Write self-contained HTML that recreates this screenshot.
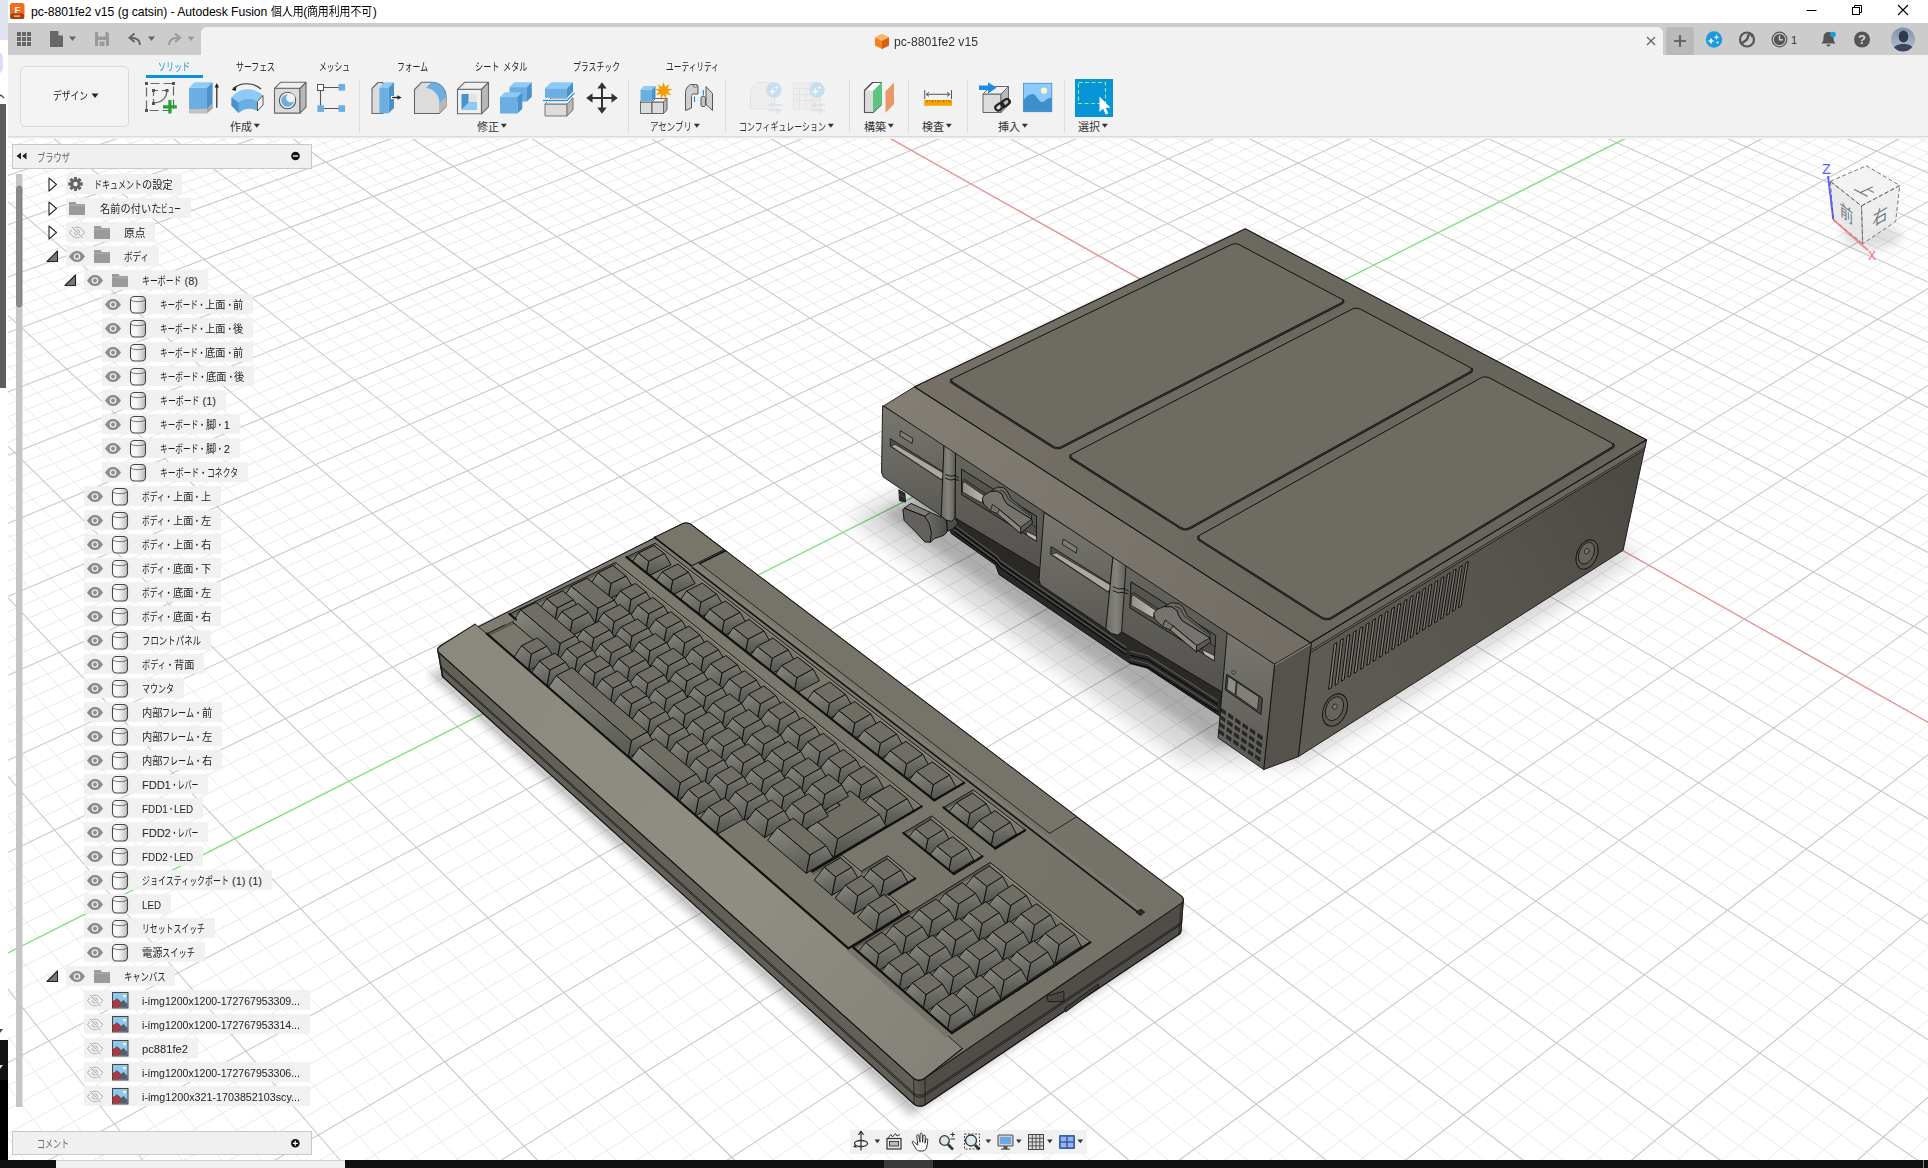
<!DOCTYPE html>
<html lang="ja"><head><meta charset="utf-8"><title>pc-8801fe2 v15 - Autodesk Fusion</title>
<style>*{box-sizing:border-box;margin:0;padding:0}
html,body{width:1928px;height:1168px;overflow:hidden;background:#fff}
body{font-family:"Liberation Sans","Noto Sans CJK JP",sans-serif;color:#222}
#app{position:relative;width:1928px;height:1168px;overflow:hidden;background:#fff}
#vp{position:absolute;left:0;top:0}
.abs{position:absolute}
#titlebar{left:8px;top:0;width:1920px;height:23px;background:#fff}
#title{left:31px;top:4px;font-size:12.2px;line-height:16px;color:#000;white-space:nowrap;letter-spacing:-0.05px}
#appbar{left:8px;top:23px;width:1920px;height:32px;background:#cccccc}
#doctab{left:201px;top:27px;width:1462px;height:29px;background:#f2f2f2;border-radius:6px 6px 0 0}
#toolbar{left:8px;top:55px;width:1920px;height:82px;background:#f2f2f2;border-bottom:1px solid #dadada}
#tbshadow{left:8px;top:137px;width:1920px;height:2px;background:linear-gradient(#e9e9e9,#f8f8f8)}
.tab{position:absolute;top:59px;font-size:11px;line-height:16px;color:#222;white-space:nowrap;transform-origin:0 50%}
.grp{position:absolute;top:119px;font-size:11px;line-height:16px;color:#333;white-space:nowrap;transform-origin:0 50%}
.nr{display:inline-block;white-space:pre}
.sq{display:inline-block;transform-origin:0 50%;white-space:pre;vertical-align:top}
.vdiv{position:absolute;top:80px;width:1px;height:52px;background:#dcdcdc}
#leftstrip{left:0;top:0;width:8px;height:1168px;background:#fff}
#botstrip{left:0;top:1160px;width:1928px;height:8px;background:#101010}
.tree{position:absolute;height:20px;background:rgba(240,240,240,.93);font-size:11px;line-height:20.5px;color:#222;white-space:nowrap}
.tree .t{position:absolute;top:1px;left:0;display:inline-block}
</style></head><body>
<div id="app">
<svg id="vp" width="1928" height="1168" viewBox="0 0 1928 1168">
<defs>
<filter id="blur6" x="-50%" y="-50%" width="200%" height="200%"><feGaussianBlur stdDeviation="6"/></filter>
<filter id="blur10" x="-50%" y="-50%" width="200%" height="200%"><feGaussianBlur stdDeviation="10"/></filter>
<filter id="blur4" x="-50%" y="-50%" width="200%" height="200%"><feGaussianBlur stdDeviation="4"/></filter>
<linearGradient id="pcTop" gradientUnits="userSpaceOnUse" x1="950" y1="420" x2="1600" y2="420"><stop offset="0" stop-color="#747067"/><stop offset=".5" stop-color="#6b6860"/><stop offset="1" stop-color="#66635b"/></linearGradient>
<linearGradient id="pcSlope" gradientUnits="userSpaceOnUse" x1="900" y1="400" x2="1300" y2="650"><stop offset="0" stop-color="#827e74"/><stop offset="1" stop-color="#726e66"/></linearGradient>
<linearGradient id="pcRight" gradientUnits="userSpaceOnUse" x1="1300" y1="700" x2="1640" y2="500"><stop offset="0" stop-color="#5f5c55"/><stop offset=".6" stop-color="#57544e"/><stop offset="1" stop-color="#4d4a45"/></linearGradient>
<linearGradient id="pcFront" x1="0" y1="0" x2="0" y2="1"><stop offset="0" stop-color="#787770"/><stop offset="1" stop-color="#5a5954"/></linearGradient>
<linearGradient id="pcRecess" x1="0" y1="0" x2="0" y2="1"><stop offset="0" stop-color="#66655f"/><stop offset="1" stop-color="#53524e"/></linearGradient>
<linearGradient id="pcPillar" x1="0" y1="0" x2="1" y2="0"><stop offset="0" stop-color="#6a6963"/><stop offset=".5" stop-color="#85847c"/><stop offset="1" stop-color="#5c5b56"/></linearGradient>
<linearGradient id="knobSide" x1="0" y1="0" x2="1" y2="0"><stop offset="0" stop-color="#706f6a"/><stop offset="1" stop-color="#4a4946"/></linearGradient>
<linearGradient id="lightL" x1="0" y1="0" x2="1" y2="0"><stop offset="0" stop-color="#8f8d86"/><stop offset="1" stop-color="#bdbab1"/></linearGradient>
<linearGradient id="kFront" x1="0" y1="0" x2="0.3" y2="1"><stop offset="0" stop-color="#8a8a84"/><stop offset="1" stop-color="#5f5f5a"/></linearGradient>
<linearGradient id="kRight" x1="0" y1="0" x2="0" y2="1"><stop offset="0" stop-color="#7b7b75"/><stop offset="1" stop-color="#4f4f4b"/></linearGradient>
<linearGradient id="kbTop" gradientUnits="userSpaceOnUse" x1="440" y1="650" x2="1180" y2="900"><stop offset="0" stop-color="#7f7c72"/><stop offset="1" stop-color="#747168"/></linearGradient>
<linearGradient id="kbPalm" gradientUnits="userSpaceOnUse" x1="440" y1="650" x2="920" y2="1080"><stop offset="0" stop-color="#8b887e"/><stop offset=".6" stop-color="#908d83"/><stop offset="1" stop-color="#85827a"/></linearGradient>
</defs>
<rect x="0" y="0" width="1928" height="1168" fill="#fff"/>
<path d="M8.0 138.4L12.2 137.0M8.0 147.5L39.6 137.0M8.0 156.8L67.0 137.0M8.0 166.2L94.4 137.0M8.0 185.2L149.2 137.0M8.0 194.9L176.5 137.0M8.0 204.7L203.9 137.0M8.0 214.7L231.3 137.0M8.0 234.9L286.1 137.0M8.0 245.2L313.5 137.0M8.0 255.7L340.9 137.0M8.0 266.2L368.3 137.0M8.0 287.8L423.1 137.0M8.0 298.7L450.5 137.0M8.0 309.9L477.9 137.0M8.0 321.1L505.2 137.0M8.0 344.1L560.0 137.0M8.0 355.8L587.4 137.0M8.0 367.6L614.8 137.0M8.0 379.7L642.2 137.0M8.0 404.2L697.0 137.0M8.0 416.7L724.4 137.0M8.0 429.4L751.8 137.0M8.0 442.3L779.2 137.0M8.0 468.5L833.9 137.0M8.0 481.9L861.3 137.0M8.0 495.5L888.7 137.0M8.0 509.3L916.1 137.0M8.0 537.5L970.9 137.0M8.0 551.9L998.3 137.0M8.0 566.5L1025.7 137.0M8.0 581.3L1053.1 137.0M8.0 611.7L1107.8 137.0M8.0 627.2L1135.2 137.0M8.0 642.9L1162.6 137.0M8.0 658.9L1190.0 137.0M8.0 691.6L1244.8 137.0M8.0 708.4L1272.2 137.0M8.0 725.4L1299.6 137.0M8.0 742.7L1327.0 137.0M8.0 778.1L1381.7 137.0M8.0 796.3L1409.1 137.0M8.0 814.7L1436.5 137.0M8.0 833.5L1463.9 137.0M8.0 871.9L1518.7 137.0M8.0 891.7L1546.1 137.0M8.0 911.7L1573.4 137.0M8.0 932.1L1600.8 137.0M8.0 974.1L1655.6 137.0M8.0 995.6L1683.0 137.0M8.0 1017.5L1710.4 137.0M8.0 1039.8L1737.8 137.0M8.0 1085.6L1792.6 137.0M8.0 1109.2L1819.9 137.0M8.0 1133.2L1847.3 137.0M8.0 1157.7L1874.7 137.0M92.4 1161.0L1928.0 137.8M137.7 1161.0L1928.0 153.3M182.9 1161.0L1928.0 169.0M228.1 1161.0L1928.0 185.0M318.6 1161.0L1928.0 218.1M363.9 1161.0L1928.0 235.2M409.1 1161.0L1928.0 252.6M454.3 1161.0L1928.0 270.3M544.8 1161.0L1928.0 307.0M590.0 1161.0L1928.0 326.0M635.3 1161.0L1928.0 345.3M680.5 1161.0L1928.0 365.1M771.0 1161.0L1928.0 406.0M816.2 1161.0L1928.0 427.2M861.5 1161.0L1928.0 448.9M906.7 1161.0L1928.0 471.0M997.2 1161.0L1928.0 517.0M1042.4 1161.0L1928.0 540.8M1087.7 1161.0L1928.0 565.2M1132.9 1161.0L1928.0 590.2M1223.4 1161.0L1928.0 642.2M1268.6 1161.0L1928.0 669.2M1313.8 1161.0L1928.0 696.9M1359.1 1161.0L1928.0 725.3M1449.5 1161.0L1928.0 784.6M1494.8 1161.0L1928.0 815.4M1540.0 1161.0L1928.0 847.1M1585.3 1161.0L1928.0 879.8M1675.7 1161.0L1928.0 947.9M1721.0 1161.0L1928.0 983.5M1766.2 1161.0L1928.0 1020.2M1811.4 1161.0L1928.0 1058.0M1901.9 1161.0L1928.0 1137.2M8.0 1137.8L25.3 1161.0M8.0 1086.3L64.7 1161.0M8.0 1036.8L104.2 1161.0M8.0 943.4L183.1 1161.0M8.0 899.3L222.5 1161.0M8.0 856.8L262.0 1161.0M8.0 815.9L301.4 1161.0M8.0 738.2L380.3 1161.0M8.0 701.3L419.8 1161.0M8.0 665.7L459.2 1161.0M8.0 631.2L498.7 1161.0M8.0 565.6L577.6 1161.0M8.0 534.3L617.0 1161.0M8.0 504.0L656.5 1161.0M8.0 474.6L695.9 1161.0M8.0 418.4L774.8 1161.0M8.0 391.5L814.3 1161.0M8.0 365.4L853.7 1161.0M8.0 340.1L893.2 1161.0M8.0 291.4L972.1 1161.0M8.0 268.1L1011.5 1161.0M8.0 245.3L1050.9 1161.0M8.0 223.2L1090.4 1161.0M8.0 180.7L1169.3 1161.0M8.0 160.2L1208.7 1161.0M8.0 140.3L1248.2 1161.0M27.9 137.0L1287.6 1161.0M75.7 137.0L1366.5 1161.0M99.6 137.0L1406.0 1161.0M123.4 137.0L1445.4 1161.0M147.3 137.0L1484.9 1161.0M195.1 137.0L1563.8 1161.0M219.0 137.0L1603.2 1161.0M242.9 137.0L1642.7 1161.0M266.7 137.0L1682.1 1161.0M314.5 137.0L1761.0 1161.0M338.4 137.0L1800.4 1161.0M362.3 137.0L1839.9 1161.0M386.2 137.0L1879.3 1161.0M433.9 137.0L1928.0 1140.7M457.8 137.0L1928.0 1114.7M481.7 137.0L1928.0 1089.2M505.6 137.0L1928.0 1064.2M553.3 137.0L1928.0 1015.6M577.2 137.0L1928.0 992.1M601.1 137.0L1928.0 968.9M625.0 137.0L1928.0 946.3M672.7 137.0L1928.0 902.1M696.6 137.0L1928.0 880.7M720.5 137.0L1928.0 859.6M744.4 137.0L1928.0 839.0M792.2 137.0L1928.0 798.7M816.0 137.0L1928.0 779.1M839.9 137.0L1928.0 759.9M863.8 137.0L1928.0 740.9M911.6 137.0L1928.0 704.0M935.4 137.0L1928.0 686.1M959.3 137.0L1928.0 668.4M983.2 137.0L1928.0 651.0M1031.0 137.0L1928.0 617.1M1054.9 137.0L1928.0 600.5M1078.7 137.0L1928.0 584.2M1102.6 137.0L1928.0 568.2M1150.4 137.0L1928.0 536.9M1174.3 137.0L1928.0 521.6M1198.1 137.0L1928.0 506.6M1222.0 137.0L1928.0 491.7M1269.8 137.0L1928.0 462.8M1293.7 137.0L1928.0 448.6M1317.5 137.0L1928.0 434.7M1341.4 137.0L1928.0 420.9M1389.2 137.0L1928.0 394.0M1413.1 137.0L1928.0 380.9M1437.0 137.0L1928.0 367.9M1460.8 137.0L1928.0 355.1M1508.6 137.0L1928.0 330.1M1532.5 137.0L1928.0 317.8M1556.4 137.0L1928.0 305.7M1580.2 137.0L1928.0 293.8M1628.0 137.0L1928.0 270.4M1651.9 137.0L1928.0 259.0M1675.8 137.0L1928.0 247.7M1699.6 137.0L1928.0 236.5M1747.4 137.0L1928.0 214.7M1771.3 137.0L1928.0 204.0M1795.2 137.0L1928.0 193.4M1819.0 137.0L1928.0 183.0M1866.8 137.0L1928.0 162.5M1890.7 137.0L1928.0 152.5M1914.6 137.0L1928.0 142.5" stroke="#e9e9e9" stroke-width="1" fill="none"/>
<path d="M8.0 175.6L121.8 137.0M8.0 224.7L258.7 137.0M8.0 276.9L395.7 137.0M8.0 332.5L532.6 137.0M8.0 391.8L669.6 137.0M8.0 455.3L806.5 137.0M8.0 523.3L943.5 137.0M8.0 596.4L1080.4 137.0M8.0 675.2L1217.4 137.0M8.0 760.3L1354.3 137.0M8.0 852.5L1491.3 137.0M8.0 952.9L1628.2 137.0M8.0 1062.5L1765.2 137.0M47.2 1161.0L1902.1 137.0M273.4 1161.0L1928.0 201.4M499.6 1161.0L1928.0 288.5M725.8 1161.0L1928.0 385.3M951.9 1161.0L1928.0 493.7M1178.1 1161.0L1928.0 615.9M1404.3 1161.0L1928.0 754.6M1630.5 1161.0L1928.0 913.3M1856.7 1161.0L1928.0 1097.0M8.0 989.2L143.6 1161.0M8.0 776.4L340.9 1161.0M8.0 597.9L538.1 1161.0M8.0 446.1L735.4 1161.0M8.0 315.4L932.6 1161.0M8.0 201.7L1129.8 1161.0M51.8 137.0L1327.1 1161.0M171.2 137.0L1524.3 1161.0M290.6 137.0L1721.5 1161.0M410.0 137.0L1918.8 1161.0M529.5 137.0L1928.0 1039.7M648.9 137.0L1928.0 924.0M768.3 137.0L1928.0 818.7M887.7 137.0L1928.0 722.3M1007.1 137.0L1928.0 633.9M1126.5 137.0L1928.0 552.4M1245.9 137.0L1928.0 477.1M1365.3 137.0L1928.0 407.4M1484.7 137.0L1928.0 342.5M1604.1 137.0L1928.0 282.0M1723.5 137.0L1928.0 225.6M1842.9 137.0L1928.0 172.7" stroke="#c9c9c9" stroke-width="1.1" fill="none"/>
<path d="M746.2 57.4L1237.4 333.8M1623.1 550.8L2446.9 1014.3" stroke="#f08a8a" stroke-width="1.2" fill="none"/>
<path d="M-146.5 1030.7L1237.4 333.8M1237.4 333.8L1725.8 87.9" stroke="#7be87b" stroke-width="1.2" fill="none"/>
<g id="models"><path d="M849.9 516.7L1183.1 759.2L1299.6 764.5L1640.5 555.8L1240.4 331.7L909.8 486.6z" fill="#000" opacity=".16" filter="url(#blur10)"/><path d="M882.2 513.3L1214.2 745.8L1294.3 749.4L920.5 493.9z" fill="#000" opacity=".18" filter="url(#blur4)"/><path d="M943.4 503.3L1221.9 683.8L1221.9 717.4L1147.0 668.0L1130.3 663.6L999.0 574.5L995.6 565.0L951.1 533.4z" fill="#2a2927" stroke="#111110" stroke-width="1" stroke-linejoin="round"/><path d="M954.5 524.9L996.8 556.1L1000.1 560.5L1125.8 647.3" fill="none" stroke="#5a5954" stroke-width="1.1" stroke-linejoin="round" stroke-linecap="round"/><path d="M954.5 527.6L996.8 558.7L1000.1 563.2L1125.8 650.0" fill="none" stroke="#0a0a0a" stroke-width="1.1" stroke-linejoin="round" stroke-linecap="round"/><path d="M954.5 529.8L996.8 561.0L1000.1 565.4L1125.8 652.2" fill="none" stroke="#55544f" stroke-width="1.1" stroke-linejoin="round" stroke-linecap="round"/><path d="M954.5 532.0L996.8 563.2L1000.1 567.6L1125.8 654.4" fill="none" stroke="#0a0a0a" stroke-width="1.1" stroke-linejoin="round" stroke-linecap="round"/><path d="M1130.3 651.3L1148.1 655.8L1217.0 700.3" fill="none" stroke="#5a5954" stroke-width="1.1" stroke-linejoin="round" stroke-linecap="round"/><path d="M1130.3 655.3L1148.1 659.8L1217.0 704.3" fill="none" stroke="#0a0a0a" stroke-width="1.1" stroke-linejoin="round" stroke-linecap="round"/><path d="M1130.3 659.3L1148.1 663.8L1217.0 708.3" fill="none" stroke="#55544f" stroke-width="1.1" stroke-linejoin="round" stroke-linecap="round"/><path d="M1130.3 662.9L1148.1 667.3L1217.0 711.8" fill="none" stroke="#0a0a0a" stroke-width="1.1" stroke-linejoin="round" stroke-linecap="round"/><path d="M898.8 489.7L904.9 493.2L905.6 502.1L899.5 500.7z" fill="#2b2a28" stroke="#111110" stroke-width="0.8" stroke-linejoin="round"/><path d="M899.5 494.5L904.9 497.5" fill="none" stroke="#555" stroke-width="0.8" stroke-linejoin="round" stroke-linecap="round"/><path d="M946.7 519.2L954.9 517.5L957.9 523.3L952.2 529.5L947.4 531.2z" fill="#4d4c48" stroke="#111110" stroke-width="0.9" stroke-linejoin="round"/><path d="M924.8 516.4L930.3 512.3L946.0 519.2L947.4 531.5L944.0 535.3L934.4 538.6L930.3 542.2z" fill="url(#knobSide)" stroke="#111110" stroke-width="0.9" stroke-linejoin="round"/><path d="M904.2 508.2L911.1 503.4L930.3 512.3L924.8 516.4z" fill="#7b7a74" stroke="#111110" stroke-width="0.9" stroke-linejoin="round"/><path d="M902.9 509.6L904.2 508.2L924.8 516.4L929.2 523.3L931.4 532.9L930.3 542.2L924.8 541.8L915.2 531.5L904.2 520.5z" fill="#62615d" stroke="#111110" stroke-width="1" stroke-linejoin="round"/><path d="M1298.3 756.7L1623.1 550.3L1646.5 439.8L1311.4 642.2z" fill="url(#pcRight)" stroke="#111110" stroke-width="0.9" stroke-linejoin="round"/><path d="M1310.2 652.8L1644.4 449.9L1646.5 439.8L1311.4 642.2z" fill="#69665e" stroke="#111110" stroke-width="0.8" stroke-linejoin="round"/><path d="M1310.5 650.3L1644.9 447.5" fill="none" stroke="#111110" stroke-width="0.7" stroke-linejoin="round" stroke-linecap="round"/><path d="M1328.6 689.4L1334.1 644.2L1336.9 642.5L1331.4 687.6z" fill="#7d7b74" stroke="#111110" stroke-width="1.0" stroke-linejoin="round"/><path d="M1335.0 685.3L1340.6 640.2L1343.4 638.5L1337.8 683.6z" fill="#7d7b74" stroke="#111110" stroke-width="1.0" stroke-linejoin="round"/><path d="M1341.4 681.3L1347.1 636.2L1349.9 634.5L1344.2 679.6z" fill="#7d7b74" stroke="#111110" stroke-width="1.0" stroke-linejoin="round"/><path d="M1347.8 677.3L1353.6 632.2L1356.3 630.5L1350.5 675.6z" fill="#7d7b74" stroke="#111110" stroke-width="1.0" stroke-linejoin="round"/><path d="M1354.1 673.3L1360.0 628.3L1362.8 626.6L1356.9 671.6z" fill="#7d7b74" stroke="#111110" stroke-width="1.0" stroke-linejoin="round"/><path d="M1360.5 669.4L1366.4 624.3L1369.2 622.6L1363.2 667.7z" fill="#7d7b74" stroke="#111110" stroke-width="1.0" stroke-linejoin="round"/><path d="M1366.8 665.4L1372.8 620.4L1375.5 618.7L1369.5 663.7z" fill="#7d7b74" stroke="#111110" stroke-width="1.0" stroke-linejoin="round"/><path d="M1373.0 661.5L1379.2 616.5L1381.9 614.8L1375.7 659.8z" fill="#7d7b74" stroke="#111110" stroke-width="1.0" stroke-linejoin="round"/><path d="M1379.3 657.5L1385.5 612.6L1388.2 610.9L1382.0 655.9z" fill="#7d7b74" stroke="#111110" stroke-width="1.0" stroke-linejoin="round"/><path d="M1385.5 653.6L1391.8 608.7L1394.5 607.0L1388.2 651.9z" fill="#7d7b74" stroke="#111110" stroke-width="1.0" stroke-linejoin="round"/><path d="M1391.7 649.7L1398.1 604.8L1400.8 603.2L1394.4 648.1z" fill="#7d7b74" stroke="#111110" stroke-width="1.0" stroke-linejoin="round"/><path d="M1397.9 645.8L1404.4 601.0L1407.0 599.3L1400.6 644.2z" fill="#7d7b74" stroke="#111110" stroke-width="1.0" stroke-linejoin="round"/><path d="M1404.1 642.0L1410.6 597.2L1413.3 595.5L1406.7 640.3z" fill="#7d7b74" stroke="#111110" stroke-width="1.0" stroke-linejoin="round"/><path d="M1410.2 638.1L1416.8 593.3L1419.5 591.7L1412.8 636.5z" fill="#7d7b74" stroke="#111110" stroke-width="1.0" stroke-linejoin="round"/><path d="M1416.3 634.3L1423.0 589.5L1425.7 587.9L1418.9 632.6z" fill="#7d7b74" stroke="#111110" stroke-width="1.0" stroke-linejoin="round"/><path d="M1422.4 630.5L1429.2 585.7L1431.8 584.1L1425.0 628.8z" fill="#7d7b74" stroke="#111110" stroke-width="1.0" stroke-linejoin="round"/><path d="M1428.5 626.7L1435.3 581.9L1438.0 580.3L1431.1 625.0z" fill="#7d7b74" stroke="#111110" stroke-width="1.0" stroke-linejoin="round"/><path d="M1434.5 622.9L1441.4 578.2L1444.1 576.6L1437.1 621.2z" fill="#7d7b74" stroke="#111110" stroke-width="1.0" stroke-linejoin="round"/><path d="M1440.5 619.1L1447.5 574.4L1450.1 572.8L1443.1 617.5z" fill="#7d7b74" stroke="#111110" stroke-width="1.0" stroke-linejoin="round"/><path d="M1446.5 615.3L1453.6 570.7L1456.2 569.1L1449.1 613.7z" fill="#7d7b74" stroke="#111110" stroke-width="1.0" stroke-linejoin="round"/><path d="M1452.5 611.6L1459.7 567.0L1462.3 565.4L1455.1 610.0z" fill="#7d7b74" stroke="#111110" stroke-width="1.0" stroke-linejoin="round"/><path d="M1458.5 607.8L1465.7 563.3L1468.3 561.7L1461.0 606.2z" fill="#7d7b74" stroke="#111110" stroke-width="1.0" stroke-linejoin="round"/><g transform="rotate(24 1335 710)"><ellipse cx="1335" cy="710" rx="11.5" ry="17" fill="#5a5751" stroke="#111110" stroke-width=".9"/><ellipse cx="1334" cy="709" rx="8.28" ry="12.58" fill="#66635c" stroke="#111110" stroke-width=".8"/><ellipse cx="1333.5" cy="707" rx="2.200" ry="2.800" fill="#7a776f" stroke="#111110" stroke-width=".7"/></g><g transform="rotate(24 1587 554.5)"><ellipse cx="1587" cy="554.5" rx="10" ry="15.5" fill="#5a5751" stroke="#111110" stroke-width=".9"/><ellipse cx="1586" cy="553.5" rx="7.199999999999999" ry="11.47" fill="#66635c" stroke="#111110" stroke-width=".8"/><ellipse cx="1585.5" cy="551.5" rx="2.200" ry="2.800" fill="#7a776f" stroke="#111110" stroke-width=".7"/></g><path d="M1263.7 769.6L1298.3 756.7L1311.4 642.2L1274.6 664.1z" fill="#55524d" stroke="#111110" stroke-width="0.9" stroke-linejoin="round"/><path d="M1268.8 660.3L1274.4 666.1L1311.2 644.2L1307.6 640.9z" fill="#8a867c"/><path d="M955.6 447.0L1051.5 509.5L1049.8 574.3L955.0 517.8z" fill="url(#pcRecess)" stroke="#111110" stroke-width="0.9" stroke-linejoin="round"/><path d="M961.5 469.2L1036.5 516.4L1036.4 541.1L961.5 494.5z" fill="#4f4e4a" stroke="#111110" stroke-width="0.9" stroke-linejoin="round"/><path d="M961.5 469.2L1036.5 516.4L1036.5 527.4L964.5 479.5L961.5 480.8z" fill="#55544f" stroke="#111110" stroke-width="0.7" stroke-linejoin="round"/><path d="M962.5 482.9L964.5 482.0L984.4 495.9L981.7 502.8L962.5 492.1z" fill="url(#lightL)" stroke="#111110" stroke-width="0.7" stroke-linejoin="round"/><path d="M1025.5 530.9L1036.4 536.3L1036.4 541.1L1027.5 535.6z" fill="#b9b6ad" stroke="#111110" stroke-width="0.7" stroke-linejoin="round"/><path d="M990.5 491.5L997.4 487.0L1003.6 487.7L1007.0 490.5L1011.1 498.6L1031.6 515.1L1031.6 519.2L1007.0 504.1L1003.5 498.6L1002.2 494.6L997.4 491.1z" fill="#6a6964" stroke="#111110" stroke-width="0.9" stroke-linejoin="round"/><path d="M1000.5 490.4L1004.9 492.4L1008.4 499.1L1030.1 516.0" fill="none" stroke="#111110" stroke-width="0.7" stroke-linejoin="round" stroke-linecap="round"/><path d="M982.3 498.0L985.1 494.6L990.5 491.5L997.4 491.1L1002.2 494.6L1003.5 498.6L1007.0 504.1L1031.6 519.2L1032.4 523.3L1020.7 533.5L997.4 513.7L990.6 510.9L983.7 504.1z" fill="#74736d" stroke="#111110" stroke-width="0.9" stroke-linejoin="round"/><path d="M997.4 513.7L1020.7 533.5L1020.7 527.4L999.4 509.5z" fill="#8a8880" stroke="#111110" stroke-width="0.8" stroke-linejoin="round"/><path d="M1020.7 533.5L1032.4 523.3L1031.6 519.2L1020.7 527.4z" fill="#5b5a56" stroke="#111110" stroke-width="0.8" stroke-linejoin="round"/><path d="M999.4 509.5L1020.7 527.4" fill="none" stroke="#111110" stroke-width="0.8" stroke-linejoin="round" stroke-linecap="round"/><path d="M990.6 510.9L992.4 504.4L999.4 509.5" fill="none" stroke="#111110" stroke-width="0.8" stroke-linejoin="round" stroke-linecap="round"/><path d="M882.6 405.6L944.0 444.5L941.9 516.4L883.1 476.8L881.5 472.1z" fill="url(#pcFront)" stroke="#111110" stroke-width="0.9" stroke-linejoin="round"/><path d="M900.4 430.8L912.8 438.3L912.2 443.5L899.8 435.8z" fill="#7d7c75" stroke="#111110" stroke-width="0.8" stroke-linejoin="round"/><path d="M890.3 438.6L945.6 473.3L945.6 478.8L941.2 479.7L890.3 446.3z" fill="#504f4b" stroke="#111110" stroke-width="0.8" stroke-linejoin="round"/><path d="M890.6 445.9L895.3 444.5L945.6 474.3L941.2 479.4z" fill="#aca89e" stroke="#111110" stroke-width="0.6" stroke-linejoin="round"/><path d="M944.0 444.5L946.7 443.8L952.2 443.9L955.6 447.3L954.9 517.8L952.1 521.4L946.0 520.0L941.2 515.9z" fill="url(#pcPillar)" stroke="#111110" stroke-width="0.9" stroke-linejoin="round"/><path d="M945.7 478.3L950.3 480.0L954.9 479.3L958.7 480.4" fill="none" stroke="#111110" stroke-width="0.9" stroke-linejoin="round" stroke-linecap="round"/><path d="M945.7 474.5L950.3 476.2L954.9 475.4L958.7 477.5" fill="none" stroke="#111110" stroke-width="0.9" stroke-linejoin="round" stroke-linecap="round"/><path d="M1125.5 558.8L1233.7 629.4L1227.8 695.5L1120.8 631.2z" fill="url(#pcRecess)" stroke="#111110" stroke-width="0.9" stroke-linejoin="round"/><path d="M1131.1 581.9L1215.7 635.4L1214.2 660.7L1129.7 607.8z" fill="#4f4e4a" stroke="#111110" stroke-width="0.9" stroke-linejoin="round"/><path d="M1131.1 581.9L1215.7 635.4L1215.1 646.7L1134.1 592.7L1130.5 593.9z" fill="#55544f" stroke="#111110" stroke-width="0.7" stroke-linejoin="round"/><path d="M1131.5 596.0L1133.9 595.2L1156.2 610.8L1152.7 617.7L1131.0 605.4z" fill="url(#lightL)" stroke="#111110" stroke-width="0.7" stroke-linejoin="round"/><path d="M1202.1 649.4L1214.5 655.7L1214.2 660.7L1204.2 654.4z" fill="#b9b6ad" stroke="#111110" stroke-width="0.7" stroke-linejoin="round"/><path d="M1163.6 606.7L1171.9 602.6L1179.0 603.8L1182.9 606.8L1187.2 615.5L1210.1 633.7L1209.9 637.9L1182.1 620.7L1178.4 614.9L1177.1 610.7L1171.6 606.8z" fill="#6a6964" stroke="#111110" stroke-width="0.9" stroke-linejoin="round"/><path d="M1175.3 606.3L1180.3 608.6L1184.0 615.8L1208.3 634.5" fill="none" stroke="#111110" stroke-width="0.7" stroke-linejoin="round" stroke-linecap="round"/><path d="M1153.7 612.8L1157.1 609.5L1163.6 606.7L1171.6 606.8L1177.1 610.7L1178.4 614.9L1182.1 620.7L1209.9 637.9L1210.5 642.2L1196.3 651.8L1170.3 630.0L1162.5 626.6L1154.9 619.2z" fill="#74736d" stroke="#111110" stroke-width="0.9" stroke-linejoin="round"/><path d="M1170.3 630.0L1196.3 651.8L1196.7 645.5L1172.9 625.8z" fill="#8a8880" stroke="#111110" stroke-width="0.8" stroke-linejoin="round"/><path d="M1196.3 651.8L1210.5 642.2L1209.9 637.9L1196.7 645.5z" fill="#5b5a56" stroke="#111110" stroke-width="0.8" stroke-linejoin="round"/><path d="M1172.9 625.8L1196.7 645.5" fill="none" stroke="#111110" stroke-width="0.8" stroke-linejoin="round" stroke-linecap="round"/><path d="M1162.5 626.6L1165.1 620.0L1172.9 625.8" fill="none" stroke="#111110" stroke-width="0.8" stroke-linejoin="round" stroke-linecap="round"/><path d="M1044.0 512.3L1113.0 556.1L1106.5 629.4L1040.6 584.9L1039.0 580.0z" fill="url(#pcFront)" stroke="#111110" stroke-width="0.9" stroke-linejoin="round"/><path d="M1063.2 539.1L1077.1 547.7L1076.2 553.0L1062.3 544.3z" fill="#7d7c75" stroke="#111110" stroke-width="0.8" stroke-linejoin="round"/><path d="M1051.0 546.5L1113.3 585.7L1113.0 591.3L1107.8 591.9L1050.7 554.4z" fill="#504f4b" stroke="#111110" stroke-width="0.8" stroke-linejoin="round"/><path d="M1051.0 553.9L1056.6 552.9L1113.3 586.7L1107.8 591.6z" fill="#aca89e" stroke="#111110" stroke-width="0.6" stroke-linejoin="round"/><path d="M1113.0 556.1L1116.3 555.6L1122.6 556.0L1126.4 559.7L1121.6 631.7L1118.0 635.2L1111.1 633.3L1105.8 628.9z" fill="url(#pcPillar)" stroke="#111110" stroke-width="0.9" stroke-linejoin="round"/><path d="M1113.2 590.8L1118.4 592.8L1123.7 592.4L1128.2 593.8" fill="none" stroke="#111110" stroke-width="0.9" stroke-linejoin="round" stroke-linecap="round"/><path d="M1113.3 586.9L1118.6 588.9L1123.9 588.5L1128.3 590.9" fill="none" stroke="#111110" stroke-width="0.9" stroke-linejoin="round" stroke-linecap="round"/><path d="M1218.1 737.8L1263.7 769.6L1274.6 664.1L1227.2 632.7z" fill="url(#pcFront)" stroke="#111110" stroke-width="0.9" stroke-linejoin="round"/><path d="M1226.7 674.1L1262.4 698.1L1260.9 714.5L1225.3 689.9z" fill="#4a4945" stroke="#111110" stroke-width="0.9" stroke-linejoin="round"/><path d="M1228.1 676.2L1236.3 681.7L1235.0 694.7L1226.8 689.2z" fill="#8e8d86" stroke="#111110" stroke-width="0.7" stroke-linejoin="round"/><path d="M1237.0 682.3L1258.9 696.7L1257.5 710.4L1235.9 695.3z" fill="#807f78" stroke="#111110" stroke-width="0.7" stroke-linejoin="round"/><circle cx="1233.5" cy="672.3" r="1.700" fill="#8a8983" stroke="#111110" stroke-width=".7"/><path d="M1221.2 708.3L1225.8 711.5L1225.5 714.7L1220.9 711.6z" fill="#2a2927" stroke="#111110" stroke-width="0.5" stroke-linejoin="round"/><path d="M1228.5 713.3L1233.0 716.4L1232.7 719.7L1228.2 716.5z" fill="#2a2927" stroke="#111110" stroke-width="0.5" stroke-linejoin="round"/><path d="M1235.7 718.3L1240.3 721.5L1240.0 724.7L1235.4 721.5z" fill="#2a2927" stroke="#111110" stroke-width="0.5" stroke-linejoin="round"/><path d="M1243.0 723.3L1247.7 726.5L1247.4 729.7L1242.7 726.6z" fill="#2a2927" stroke="#111110" stroke-width="0.5" stroke-linejoin="round"/><path d="M1250.4 728.4L1255.0 731.5L1254.7 734.8L1250.1 731.6z" fill="#2a2927" stroke="#111110" stroke-width="0.5" stroke-linejoin="round"/><path d="M1257.8 733.4L1262.4 736.6L1262.1 739.9L1257.5 736.7z" fill="#2a2927" stroke="#111110" stroke-width="0.5" stroke-linejoin="round"/><path d="M1220.6 715.5L1225.1 718.6L1224.9 721.9L1220.3 718.7z" fill="#2a2927" stroke="#111110" stroke-width="0.5" stroke-linejoin="round"/><path d="M1227.8 720.5L1232.4 723.6L1232.1 726.9L1227.5 723.7z" fill="#2a2927" stroke="#111110" stroke-width="0.5" stroke-linejoin="round"/><path d="M1235.1 725.5L1239.7 728.6L1239.4 731.9L1234.8 728.7z" fill="#2a2927" stroke="#111110" stroke-width="0.5" stroke-linejoin="round"/><path d="M1242.4 730.5L1247.0 733.7L1246.7 736.9L1242.1 733.7z" fill="#2a2927" stroke="#111110" stroke-width="0.5" stroke-linejoin="round"/><path d="M1249.7 735.6L1254.3 738.7L1254.0 742.0L1249.4 738.8z" fill="#2a2927" stroke="#111110" stroke-width="0.5" stroke-linejoin="round"/><path d="M1257.1 740.6L1261.7 743.8L1261.4 747.1L1256.7 743.9z" fill="#2a2927" stroke="#111110" stroke-width="0.5" stroke-linejoin="round"/><path d="M1220.0 722.7L1224.5 725.8L1224.2 729.0L1219.7 725.9z" fill="#2a2927" stroke="#111110" stroke-width="0.5" stroke-linejoin="round"/><path d="M1227.2 727.6L1231.7 730.8L1231.4 734.0L1226.9 730.9z" fill="#2a2927" stroke="#111110" stroke-width="0.5" stroke-linejoin="round"/><path d="M1234.4 732.6L1239.0 735.8L1238.7 739.0L1234.1 735.9z" fill="#2a2927" stroke="#111110" stroke-width="0.5" stroke-linejoin="round"/><path d="M1241.7 737.7L1246.3 740.8L1246.0 744.1L1241.4 740.9z" fill="#2a2927" stroke="#111110" stroke-width="0.5" stroke-linejoin="round"/><path d="M1249.0 742.7L1253.6 745.9L1253.3 749.1L1248.7 745.9z" fill="#2a2927" stroke="#111110" stroke-width="0.5" stroke-linejoin="round"/><path d="M1256.3 747.8L1261.0 751.0L1260.6 754.2L1256.0 751.0z" fill="#2a2927" stroke="#111110" stroke-width="0.5" stroke-linejoin="round"/><path d="M1219.4 729.8L1223.9 732.9L1223.6 736.1L1219.1 733.0z" fill="#2a2927" stroke="#111110" stroke-width="0.5" stroke-linejoin="round"/><path d="M1226.5 734.8L1231.1 737.9L1230.8 741.1L1226.3 738.0z" fill="#2a2927" stroke="#111110" stroke-width="0.5" stroke-linejoin="round"/><path d="M1233.8 739.8L1238.3 742.9L1238.0 746.1L1233.5 743.0z" fill="#2a2927" stroke="#111110" stroke-width="0.5" stroke-linejoin="round"/><path d="M1241.0 744.8L1245.6 748.0L1245.3 751.2L1240.7 748.0z" fill="#2a2927" stroke="#111110" stroke-width="0.5" stroke-linejoin="round"/><path d="M1248.3 749.9L1252.9 753.0L1252.6 756.2L1248.0 753.1z" fill="#2a2927" stroke="#111110" stroke-width="0.5" stroke-linejoin="round"/><path d="M1255.6 754.9L1260.3 758.1L1259.9 761.3L1255.3 758.1z" fill="#2a2927" stroke="#111110" stroke-width="0.5" stroke-linejoin="round"/><path d="M883.7 405.9L1274.6 664.1L1310.5 642.8L914.5 386.8z" fill="url(#pcSlope)" stroke="#111110" stroke-width="0.9" stroke-linejoin="round"/><path d="M914.5 386.8L1310.5 642.8L1646.5 439.8L1245.4 228.8z" fill="url(#pcTop)" stroke="#111110" stroke-width="1.1" stroke-linejoin="round"/><path d="M1341.9 303.2L1343.2 301.9L1343.1 300.5L1341.6 299.1L1239.3 244.7L1236.9 243.9L1234.2 243.8L1231.8 244.4L952.9 378.4L951.3 379.7L951.0 381.4L952.3 382.8L1053.2 447.0L1055.7 448.0L1058.8 448.1L1061.5 447.3z" fill="#6e6b63" stroke="#111110" stroke-width="1.0" stroke-linejoin="round"/><path d="M951.3 379.7L951.0 381.4L952.3 382.8L1053.2 447.0L1055.7 448.0L1058.8 448.1L1061.5 447.3L1341.9 303.2L1343.2 301.9L1343.1 300.5" fill="none" stroke="#111110" stroke-width="2.3" stroke-linejoin="round" stroke-linecap="round"/><path d="M951.3 379.7L951.0 381.4L952.3 382.8L1053.2 447.0L1055.7 448.0L1058.8 448.1L1061.5 447.3L1341.9 303.2L1343.2 301.9L1343.1 300.5" fill="none" stroke="#55534e" stroke-width="0.6" stroke-linejoin="round" stroke-linecap="round"/><path d="M1470.8 371.9L1472.0 370.6L1471.8 369.0L1470.1 367.5L1360.4 309.1L1357.8 308.3L1355.0 308.2L1352.6 308.9L1072.0 454.0L1070.4 455.4L1070.3 457.2L1071.8 458.8L1180.7 528.1L1183.4 529.1L1186.6 529.3L1189.4 528.4z" fill="#6e6b63" stroke="#111110" stroke-width="1.0" stroke-linejoin="round"/><path d="M1070.4 455.4L1070.3 457.2L1071.8 458.8L1180.7 528.1L1183.4 529.1L1186.6 529.3L1189.4 528.4L1470.8 371.9L1472.0 370.6L1471.8 369.0" fill="none" stroke="#111110" stroke-width="2.3" stroke-linejoin="round" stroke-linecap="round"/><path d="M1070.4 455.4L1070.3 457.2L1071.8 458.8L1180.7 528.1L1183.4 529.1L1186.6 529.3L1189.4 528.4L1470.8 371.9L1472.0 370.6L1471.8 369.0" fill="none" stroke="#55534e" stroke-width="0.6" stroke-linejoin="round" stroke-linecap="round"/><path d="M1612.4 447.5L1613.6 446.0L1613.2 444.2L1611.3 442.7L1489.5 377.9L1486.8 377.0L1483.8 376.9L1481.4 377.6L1200.0 535.1L1198.4 536.7L1198.4 538.7L1200.0 540.4L1321.8 617.9L1324.8 619.0L1328.2 619.2L1331.0 618.3z" fill="#6e6b63" stroke="#111110" stroke-width="1.0" stroke-linejoin="round"/><path d="M1198.4 536.7L1198.4 538.7L1200.0 540.4L1321.8 617.9L1324.8 619.0L1328.2 619.2L1331.0 618.3L1612.4 447.5L1613.6 446.0L1613.2 444.2" fill="none" stroke="#111110" stroke-width="2.3" stroke-linejoin="round" stroke-linecap="round"/><path d="M1198.4 536.7L1198.4 538.7L1200.0 540.4L1321.8 617.9L1324.8 619.0L1328.2 619.2L1331.0 618.3L1612.4 447.5L1613.6 446.0L1613.2 444.2" fill="none" stroke="#55534e" stroke-width="0.6" stroke-linejoin="round" stroke-linecap="round"/><path d="M428.1 674.3L910.9 1116.2L1186.4 932.8L688.9 546.4z" fill="#000" opacity=".22" filter="url(#blur4)"/><path d="M1181.3 903.4L1182.4 902.3L1180.0 933.5L1178.8 934.5z" fill="#504d48" stroke="#504d48" stroke-width="0.6" stroke-linejoin="round"/><path d="M1182.4 902.3L1183.2 901.1L1180.7 932.2L1180.0 933.5z" fill="#514e49" stroke="#514e49" stroke-width="0.6" stroke-linejoin="round"/><path d="M1183.2 901.1L1183.4 899.8L1181.0 930.9L1180.7 932.2z" fill="#53504b" stroke="#53504b" stroke-width="0.6" stroke-linejoin="round"/><path d="M437.7 650.2L438.0 651.4L442.5 676.4L442.2 675.4z" fill="#625f58" stroke="#625f58" stroke-width="0.6" stroke-linejoin="round"/><path d="M438.0 651.4L438.7 652.3L443.2 677.3L442.5 676.4z" fill="#625f58" stroke="#625f58" stroke-width="0.6" stroke-linejoin="round"/><path d="M438.7 652.3L913.7 1078.3L914.2 1104.2L443.2 677.3z" fill="#625f58" stroke="#625f58" stroke-width="0.6" stroke-linejoin="round"/><path d="M913.7 1078.3L915.2 1079.3L915.7 1105.2L914.2 1104.2z" fill="#5f5c55" stroke="#5f5c55" stroke-width="0.6" stroke-linejoin="round"/><path d="M915.2 1079.3L917.0 1080.0L917.6 1105.9L915.7 1105.2z" fill="#5b5851" stroke="#5b5851" stroke-width="0.6" stroke-linejoin="round"/><path d="M917.0 1080.0L919.1 1080.1L919.6 1106.2L917.6 1105.9z" fill="#57544e" stroke="#57544e" stroke-width="0.6" stroke-linejoin="round"/><path d="M919.1 1080.1L921.1 1079.9L921.6 1106.1L919.6 1106.2z" fill="#53504b" stroke="#53504b" stroke-width="0.6" stroke-linejoin="round"/><path d="M921.1 1079.9L923.1 1079.2L923.6 1105.6L921.6 1106.1z" fill="#514e49" stroke="#514e49" stroke-width="0.6" stroke-linejoin="round"/><path d="M923.1 1079.2L924.8 1078.1L925.3 1104.7L923.6 1105.6z" fill="#504d48" stroke="#504d48" stroke-width="0.6" stroke-linejoin="round"/><path d="M924.8 1078.1L1181.3 903.4L1178.8 934.5L925.3 1104.7z" fill="#504d48" stroke="#504d48" stroke-width="0.6" stroke-linejoin="round"/><path d="M442.2 675.4L442.5 676.4L443.2 677.3L914.2 1104.2L915.7 1105.2L917.6 1105.9L919.6 1106.2L921.6 1106.1L923.6 1105.6L925.3 1104.7L1178.8 934.5L1180.0 933.5L1180.7 932.2L1181.0 930.9" fill="none" stroke="#111110" stroke-width="1.2" stroke-linejoin="round" stroke-linecap="round"/><path d="M440.3 664.7L440.6 665.8L441.3 666.7L914.0 1093.2L915.5 1094.2L917.3 1094.9L919.4 1095.2L921.4 1095.1L923.4 1094.6L925.1 1093.7L1179.7 923.6L1180.9 922.5L1181.6 921.3L1181.8 920.0" fill="none" stroke="#111110" stroke-width="0.8" stroke-linejoin="round" stroke-linecap="round"/><path d="M440.6 666.6L440.9 667.6L441.6 668.5L914.0 1095.1L915.6 1096.1L917.4 1096.8L919.4 1097.2L921.5 1097.1L923.4 1096.5L925.1 1095.7L1179.5 925.5L1180.7 924.5L1181.4 923.2L1181.7 921.9" fill="none" stroke="#111110" stroke-width="0.8" stroke-linejoin="round" stroke-linecap="round"/><path d="M437.7 650.2L442.2 675.4" fill="none" stroke="#111110" stroke-width="0.9" stroke-linejoin="round" stroke-linecap="round"/><path d="M1183.4 899.8L1181.0 930.9" fill="none" stroke="#111110" stroke-width="0.9" stroke-linejoin="round" stroke-linecap="round"/><path d="M438.7 652.3L443.2 677.3" fill="none" stroke="#111110" stroke-width="0.7" stroke-linejoin="round" stroke-linecap="round"/><path d="M913.7 1078.3L914.2 1104.2" fill="none" stroke="#111110" stroke-width="0.7" stroke-linejoin="round" stroke-linecap="round"/><path d="M924.8 1078.1L925.3 1104.7" fill="none" stroke="#111110" stroke-width="0.7" stroke-linejoin="round" stroke-linecap="round"/><path d="M1181.3 903.4L1178.8 934.5" fill="none" stroke="#111110" stroke-width="0.7" stroke-linejoin="round" stroke-linecap="round"/><path d="M1047.1 996.0L1063.9 991.3L1063.9 1001.6L1048.0 1001.6z" fill="#4a4742" stroke="#111110" stroke-width="0.8" stroke-linejoin="round"/><path d="M1064.8 1008.1L1098.4 983.9L1098.4 987.6L1065.8 1011.9z" fill="#3f3d39" stroke="#111110" stroke-width="0.8" stroke-linejoin="round"/><path d="M1181.3 903.4L1182.4 902.3L1183.2 901.1L1183.4 899.8L1183.2 898.4L1182.4 897.1L1181.3 895.9L690.7 524.3L689.5 523.7L688.1 523.2L686.6 523.1L685.0 523.1L683.4 523.4L682.0 524.0L440.7 645.7L439.4 646.7L438.4 647.8L437.9 649.0L437.7 650.2L438.0 651.4L438.7 652.3L913.7 1078.3L915.2 1079.3L917.0 1080.0L919.1 1080.1L921.1 1079.9L923.1 1079.2L924.8 1078.1z" fill="url(#kbTop)" stroke="#111110" stroke-width="1.1" stroke-linejoin="round"/><path d="M475.0 624.1L440.7 645.7L439.4 646.7L438.4 647.8L437.9 649.0L437.7 650.2L438.0 651.4L438.7 652.3L913.7 1078.3L915.2 1079.3L917.0 1080.0L919.1 1080.1L921.1 1079.9L923.1 1079.2L924.8 1078.1L962.4 1048.5z" fill="url(#kbPalm)"/><path d="M440.7 645.7L439.4 646.7L438.4 647.8L437.9 649.0L437.7 650.2L438.0 651.4L438.7 652.3L913.7 1078.3L915.2 1079.3L917.0 1080.0L919.1 1080.1L921.1 1079.9L923.1 1079.2L924.8 1078.1" fill="none" stroke="#111110" stroke-width="1.1" stroke-linejoin="round" stroke-linecap="round"/><path d="M475.0 624.1L440.7 645.7" fill="none" stroke="#111110" stroke-width="1.1" stroke-linejoin="round" stroke-linecap="round"/><path d="M924.8 1078.1L962.4 1048.5" fill="none" stroke="#111110" stroke-width="1.1" stroke-linejoin="round" stroke-linecap="round"/><path d="M475.0 624.1L486.8 633.7" fill="none" stroke="#111110" stroke-width="0.8" stroke-linejoin="round" stroke-linecap="round"/><path d="M947.9 1035.9L962.4 1048.5" fill="none" stroke="#111110" stroke-width="0.8" stroke-linejoin="round" stroke-linecap="round"/><path d="M692.4 567.6L1141.0 914.7" fill="none" stroke="#111110" stroke-width="1.5" stroke-linejoin="round" stroke-linecap="round"/><path d="M695.2 566.2L1143.9 912.8" fill="none" stroke="#8d8a80" stroke-width="0.9" stroke-linejoin="round" stroke-linecap="round"/><path d="M1136.0 912.3L1140.0 915.4L1144.9 912.2L1140.9 909.1z" fill="#2c2b29" stroke="#111110" stroke-width="0.7" stroke-linejoin="round"/><path d="M654.4 537.3L691.4 565.9L724.1 549.7L690.7 524.3L689.5 523.7L688.1 523.2L686.6 523.1L685.0 523.1L683.4 523.4L682.0 524.0z" fill="#787569" stroke="#111110" stroke-width="1.0" stroke-linejoin="round"/><path d="M654.4 537.3L691.4 565.9" fill="none" stroke="#111110" stroke-width="1.6" stroke-linejoin="round" stroke-linecap="round"/><path d="M699.5 563.6L1049.7 833.4L1076.7 816.7L725.5 550.7z" fill="#76736a" stroke="#111110" stroke-width="0.8" stroke-linejoin="round"/><path d="M699.5 563.6L725.5 550.7" fill="none" stroke="#111110" stroke-width="1.6" stroke-linejoin="round" stroke-linecap="round"/><clipPath id="wc1"><path d="M626.5 557.1L934.4 800.4L964.2 782.8L655.2 543.2z"/></clipPath><g clip-path="url(#wc1)"><path d="M626.5 557.1L934.4 800.4L964.2 782.8L655.2 543.2z" fill="#2a2927"/><path d="M626.8 559.9L934.4 803.3L964.2 785.7L655.5 545.9z" fill="#7a776d"/><path d="M964.2 782.8L655.2 543.2L655.5 545.9L964.2 785.7z" fill="#8b887e"/><path d="M655.2 543.2L626.5 557.1L626.8 559.9L655.5 545.9z" fill="#5d5b55"/></g><path d="M626.5 557.1L934.4 800.4L964.2 782.8L655.2 543.2z" fill="none" stroke="#111110" stroke-width="0.9" stroke-linejoin="round"/><clipPath id="wc2"><path d="M943.4 807.5L995.3 848.5L1025.2 830.2L973.2 789.8z"/></clipPath><g clip-path="url(#wc2)"><path d="M943.4 807.5L995.3 848.5L1025.2 830.2L973.2 789.8z" fill="#2a2927"/><path d="M943.4 810.4L995.2 851.4L1025.2 833.0L973.2 792.7z" fill="#7a776d"/><path d="M1025.2 830.2L973.2 789.8L973.2 792.7L1025.2 833.0z" fill="#8b887e"/><path d="M973.2 789.8L943.4 807.5L943.4 810.4L973.2 792.7z" fill="#5d5b55"/></g><path d="M943.4 807.5L995.3 848.5L1025.2 830.2L973.2 789.8z" fill="none" stroke="#111110" stroke-width="0.9" stroke-linejoin="round"/><clipPath id="wc3"><path d="M486.8 633.7L848.3 948.4L908.7 911.2L888.8 894.5L915.2 878.5L887.5 855.7L861.2 871.4L841.4 854.8L812.4 871.9L811.8 871.4L921.8 806.4L615.5 562.5L509.4 614.0L516.0 619.5z"/></clipPath><g clip-path="url(#wc3)"><path d="M486.8 633.7L848.3 948.4L908.7 911.2L888.8 894.5L915.2 878.5L887.5 855.7L861.2 871.4L841.4 854.8L812.4 871.9L811.8 871.4L921.8 806.4L615.5 562.5L509.4 614.0L516.0 619.5z" fill="#2a2927"/><path d="M487.3 636.6L848.5 951.3L908.7 914.1L888.9 897.4L915.2 881.4L887.6 858.6L861.3 874.3L841.5 857.7L812.6 874.8L812.0 874.3L921.9 809.3L615.8 565.3L509.9 616.8L516.4 622.3z" fill="#7a776d"/><path d="M908.7 911.2L888.8 894.5L888.9 897.4L908.7 914.1z" fill="#8b887e"/><path d="M915.2 878.5L887.5 855.7L887.6 858.6L915.2 881.4z" fill="#8b887e"/><path d="M887.5 855.7L861.2 871.4L861.3 874.3L887.6 858.6z" fill="#5d5b55"/><path d="M861.2 871.4L841.4 854.8L841.5 857.7L861.3 874.3z" fill="#8b887e"/><path d="M841.4 854.8L812.4 871.9L812.6 874.8L841.5 857.7z" fill="#5d5b55"/><path d="M812.4 871.9L811.8 871.4L812.0 874.3L812.6 874.8z" fill="#8b887e"/><path d="M921.8 806.4L615.5 562.5L615.8 565.3L921.9 809.3z" fill="#8b887e"/><path d="M615.5 562.5L509.4 614.0L509.9 616.8L615.8 565.3z" fill="#5d5b55"/><path d="M516.0 619.5L486.8 633.7L487.3 636.6L516.4 622.3z" fill="#5d5b55"/></g><path d="M486.8 633.7L848.3 948.4L908.7 911.2L888.8 894.5L915.2 878.5L887.5 855.7L861.2 871.4L841.4 854.8L812.4 871.9L811.8 871.4L921.8 806.4L615.5 562.5L509.4 614.0L516.0 619.5z" fill="none" stroke="#111110" stroke-width="0.9" stroke-linejoin="round"/><clipPath id="wc4"><path d="M903.2 832.9L953.8 874.0L982.5 856.4L931.7 816.0z"/></clipPath><g clip-path="url(#wc4)"><path d="M903.2 832.9L953.8 874.0L982.5 856.4L931.7 816.0z" fill="#2a2927"/><path d="M903.2 835.8L953.8 876.9L982.5 859.3L931.7 818.8z" fill="#7a776d"/><path d="M982.5 856.4L931.7 816.0L931.7 818.8L982.5 859.3z" fill="#8b887e"/><path d="M931.7 816.0L903.2 832.9L903.2 835.8L931.7 818.8z" fill="#5d5b55"/></g><path d="M903.2 832.9L953.8 874.0L982.5 856.4L931.7 816.0z" fill="none" stroke="#111110" stroke-width="0.9" stroke-linejoin="round"/><clipPath id="wc5"><path d="M852.9 947.2L951.9 1033.2L1090.3 942.3L990.1 862.5z"/></clipPath><g clip-path="url(#wc5)"><path d="M852.9 947.2L951.9 1033.2L1090.3 942.3L990.1 862.5z" fill="#2a2927"/><path d="M853.0 950.1L951.9 1036.1L1090.2 945.2L990.1 865.4z" fill="#7a776d"/><path d="M1090.3 942.3L990.1 862.5L990.1 865.4L1090.2 945.2z" fill="#8b887e"/><path d="M990.1 862.5L852.9 947.2L853.0 950.1L990.1 865.4z" fill="#5d5b55"/></g><path d="M852.9 947.2L951.9 1033.2L1090.3 942.3L990.1 862.5z" fill="none" stroke="#111110" stroke-width="0.9" stroke-linejoin="round"/><path d="M648.7 561.2L664.4 553.5L671.0 564.8L645.6 577.4z" fill="url(#kRight)" stroke="#111110" stroke-width="1.0" stroke-linejoin="round"/><path d="M638.3 553.1L648.7 561.2L645.6 577.4L630.1 565.1z" fill="url(#kFront)" stroke="#111110" stroke-width="1.0" stroke-linejoin="round"/><path d="M638.3 553.1L648.7 561.2L664.4 553.5L654.0 545.5z" fill="#706d64" stroke="#111110" stroke-width="1.0" stroke-linejoin="round"/><path d="M672.7 580.1L688.4 572.3L695.1 583.6L669.6 596.4z" fill="url(#kRight)" stroke="#111110" stroke-width="1.0" stroke-linejoin="round"/><path d="M662.2 571.8L672.7 580.1L669.6 596.4L653.8 583.9z" fill="url(#kFront)" stroke="#111110" stroke-width="1.0" stroke-linejoin="round"/><path d="M662.2 571.8L672.7 580.1L688.4 572.3L677.9 564.0z" fill="#706d64" stroke="#111110" stroke-width="1.0" stroke-linejoin="round"/><path d="M700.9 602.2L716.7 594.2L723.3 605.6L697.7 618.7z" fill="url(#kRight)" stroke="#111110" stroke-width="1.0" stroke-linejoin="round"/><path d="M686.6 591.0L700.9 602.2L697.7 618.7L678.1 603.2z" fill="url(#kFront)" stroke="#111110" stroke-width="1.0" stroke-linejoin="round"/><path d="M686.6 591.0L700.9 602.2L716.7 594.2L702.4 583.1z" fill="#706d64" stroke="#111110" stroke-width="1.0" stroke-linejoin="round"/><path d="M724.2 620.5L740.1 612.4L746.7 623.8L721.0 637.1z" fill="url(#kRight)" stroke="#111110" stroke-width="1.0" stroke-linejoin="round"/><path d="M709.7 609.1L724.2 620.5L721.0 637.1L701.1 621.3z" fill="url(#kFront)" stroke="#111110" stroke-width="1.0" stroke-linejoin="round"/><path d="M709.7 609.1L724.2 620.5L740.1 612.4L725.5 601.1z" fill="#706d64" stroke="#111110" stroke-width="1.0" stroke-linejoin="round"/><path d="M748.0 639.2L763.9 630.9L770.5 642.4L744.8 655.9z" fill="url(#kRight)" stroke="#111110" stroke-width="1.0" stroke-linejoin="round"/><path d="M733.3 627.6L748.0 639.2L744.8 655.9L724.5 639.9z" fill="url(#kFront)" stroke="#111110" stroke-width="1.0" stroke-linejoin="round"/><path d="M733.3 627.6L748.0 639.2L763.9 630.9L749.1 619.4z" fill="#706d64" stroke="#111110" stroke-width="1.0" stroke-linejoin="round"/><path d="M772.3 658.2L788.2 649.8L794.8 661.3L768.9 675.1z" fill="url(#kRight)" stroke="#111110" stroke-width="1.0" stroke-linejoin="round"/><path d="M757.2 646.4L772.3 658.2L768.9 675.1L748.3 658.7z" fill="url(#kFront)" stroke="#111110" stroke-width="1.0" stroke-linejoin="round"/><path d="M757.2 646.4L772.3 658.2L788.2 649.8L773.1 638.1z" fill="#706d64" stroke="#111110" stroke-width="1.0" stroke-linejoin="round"/><path d="M797.0 677.6L813.0 669.0L819.5 680.6L793.6 694.6z" fill="url(#kRight)" stroke="#111110" stroke-width="1.0" stroke-linejoin="round"/><path d="M781.6 665.6L797.0 677.6L793.6 694.6L772.5 678.0z" fill="url(#kFront)" stroke="#111110" stroke-width="1.0" stroke-linejoin="round"/><path d="M781.6 665.6L797.0 677.6L813.0 669.0L797.6 657.1z" fill="#706d64" stroke="#111110" stroke-width="1.0" stroke-linejoin="round"/><path d="M829.5 703.2L845.6 694.4L852.1 706.0L826.1 720.4z" fill="url(#kRight)" stroke="#111110" stroke-width="1.0" stroke-linejoin="round"/><path d="M813.8 690.9L829.5 703.2L826.1 720.4L804.5 703.3z" fill="url(#kFront)" stroke="#111110" stroke-width="1.0" stroke-linejoin="round"/><path d="M813.8 690.9L829.5 703.2L845.6 694.4L829.8 682.1z" fill="#706d64" stroke="#111110" stroke-width="1.0" stroke-linejoin="round"/><path d="M854.8 723.0L870.8 714.0L877.3 725.6L851.2 740.3z" fill="url(#kRight)" stroke="#111110" stroke-width="1.0" stroke-linejoin="round"/><path d="M838.7 710.4L854.8 723.0L851.2 740.3L829.3 722.9z" fill="url(#kFront)" stroke="#111110" stroke-width="1.0" stroke-linejoin="round"/><path d="M838.7 710.4L854.8 723.0L870.8 714.0L854.8 701.5z" fill="#706d64" stroke="#111110" stroke-width="1.0" stroke-linejoin="round"/><path d="M880.4 743.1L896.6 734.0L903.0 745.7L876.9 760.6z" fill="url(#kRight)" stroke="#111110" stroke-width="1.0" stroke-linejoin="round"/><path d="M864.1 730.3L880.4 743.1L876.9 760.6L854.5 742.9z" fill="url(#kFront)" stroke="#111110" stroke-width="1.0" stroke-linejoin="round"/><path d="M864.1 730.3L880.4 743.1L896.6 734.0L880.2 721.3z" fill="#706d64" stroke="#111110" stroke-width="1.0" stroke-linejoin="round"/><path d="M906.6 763.7L922.8 754.4L929.2 766.1L903.0 781.3z" fill="url(#kRight)" stroke="#111110" stroke-width="1.0" stroke-linejoin="round"/><path d="M890.0 750.6L906.6 763.7L903.0 781.3L880.2 763.3z" fill="url(#kFront)" stroke="#111110" stroke-width="1.0" stroke-linejoin="round"/><path d="M890.0 750.6L906.6 763.7L922.8 754.4L906.1 741.4z" fill="#706d64" stroke="#111110" stroke-width="1.0" stroke-linejoin="round"/><path d="M933.3 784.6L949.5 775.1L955.9 786.9L929.6 802.4z" fill="url(#kRight)" stroke="#111110" stroke-width="1.0" stroke-linejoin="round"/><path d="M916.3 771.3L933.3 784.6L929.6 802.4L906.4 784.0z" fill="url(#kFront)" stroke="#111110" stroke-width="1.0" stroke-linejoin="round"/><path d="M916.3 771.3L933.3 784.6L949.5 775.1L932.5 761.9z" fill="#706d64" stroke="#111110" stroke-width="1.0" stroke-linejoin="round"/><path d="M970.0 813.4L986.2 803.7L992.6 815.5L966.2 831.4z" fill="url(#kRight)" stroke="#111110" stroke-width="1.0" stroke-linejoin="round"/><path d="M956.4 802.7L970.0 813.4L966.2 831.4L946.1 815.5z" fill="url(#kFront)" stroke="#111110" stroke-width="1.0" stroke-linejoin="round"/><path d="M956.4 802.7L970.0 813.4L986.2 803.7L972.6 793.1z" fill="#706d64" stroke="#111110" stroke-width="1.0" stroke-linejoin="round"/><path d="M993.9 832.2L1010.2 822.3L1016.5 834.1L990.1 850.3z" fill="url(#kRight)" stroke="#111110" stroke-width="1.0" stroke-linejoin="round"/><path d="M979.0 820.5L993.9 832.2L990.1 850.3L968.6 833.3z" fill="url(#kFront)" stroke="#111110" stroke-width="1.0" stroke-linejoin="round"/><path d="M979.0 820.5L993.9 832.2L1010.2 822.3L995.2 810.7z" fill="#706d64" stroke="#111110" stroke-width="1.0" stroke-linejoin="round"/><path d="M958.6 786.1L964.2 782.8" fill="none" stroke="#111110" stroke-width="2.2" stroke-linejoin="round" stroke-linecap="round"/><path d="M1019.7 833.6L1025.2 830.2" fill="none" stroke="#111110" stroke-width="2.2" stroke-linejoin="round" stroke-linecap="round"/><path d="M934.4 800.4L958.6 786.1" fill="none" stroke="#111110" stroke-width="2.2" stroke-linejoin="round" stroke-linecap="round"/><path d="M995.3 848.5L1019.7 833.6" fill="none" stroke="#111110" stroke-width="2.2" stroke-linejoin="round" stroke-linecap="round"/><path d="M626.5 557.1L934.4 800.4L924.1 806.5L616.6 561.9z" fill="url(#kbTop)"/><path d="M626.5 557.1L934.4 800.4" fill="none" stroke="#111110" stroke-width="2.2" stroke-linejoin="round" stroke-linecap="round"/><path d="M943.4 807.5L995.3 848.5L984.9 854.9L933.1 813.7z" fill="url(#kbTop)"/><path d="M943.4 807.5L995.3 848.5" fill="none" stroke="#111110" stroke-width="2.2" stroke-linejoin="round" stroke-linecap="round"/><path d="M887.2 810.2L907.1 798.6L913.7 810.4L883.6 828.2z" fill="url(#kRight)" stroke="#111110" stroke-width="1.0" stroke-linejoin="round"/><path d="M870.2 796.4L887.2 810.2L883.6 828.2L860.2 809.2z" fill="url(#kFront)" stroke="#111110" stroke-width="1.0" stroke-linejoin="round"/><path d="M870.2 796.4L887.2 810.2L907.1 798.6L889.9 785.0z" fill="#706d64" stroke="#111110" stroke-width="1.0" stroke-linejoin="round"/><path d="M611.0 583.4L626.0 576.0L632.9 587.3L607.9 599.7z" fill="url(#kRight)" stroke="#111110" stroke-width="1.0" stroke-linejoin="round"/><path d="M598.0 572.9L611.0 583.4L607.9 599.7L589.8 585.0z" fill="url(#kFront)" stroke="#111110" stroke-width="1.0" stroke-linejoin="round"/><path d="M598.0 572.9L611.0 583.4L626.0 576.0L613.0 565.6z" fill="#706d64" stroke="#111110" stroke-width="1.0" stroke-linejoin="round"/><path d="M631.0 599.5L646.1 592.0L653.0 603.4L627.9 615.9z" fill="url(#kRight)" stroke="#111110" stroke-width="1.0" stroke-linejoin="round"/><path d="M620.3 590.9L631.0 599.5L627.9 615.9L612.0 603.1z" fill="url(#kFront)" stroke="#111110" stroke-width="1.0" stroke-linejoin="round"/><path d="M620.3 590.9L631.0 599.5L646.1 592.0L635.4 583.5z" fill="#706d64" stroke="#111110" stroke-width="1.0" stroke-linejoin="round"/><path d="M648.7 613.8L663.8 606.2L670.7 617.6L645.5 630.3z" fill="url(#kRight)" stroke="#111110" stroke-width="1.0" stroke-linejoin="round"/><path d="M637.9 605.1L648.7 613.8L645.5 630.3L629.5 617.2z" fill="url(#kFront)" stroke="#111110" stroke-width="1.0" stroke-linejoin="round"/><path d="M637.9 605.1L648.7 613.8L663.8 606.2L653.0 597.5z" fill="#706d64" stroke="#111110" stroke-width="1.0" stroke-linejoin="round"/><path d="M666.6 628.2L681.8 620.5L688.6 632.0L663.4 644.9z" fill="url(#kRight)" stroke="#111110" stroke-width="1.0" stroke-linejoin="round"/><path d="M655.7 619.4L666.6 628.2L663.4 644.9L647.1 631.6z" fill="url(#kFront)" stroke="#111110" stroke-width="1.0" stroke-linejoin="round"/><path d="M655.7 619.4L666.6 628.2L681.8 620.5L670.8 611.7z" fill="#706d64" stroke="#111110" stroke-width="1.0" stroke-linejoin="round"/><path d="M684.8 642.9L700.0 635.1L706.9 646.5L681.6 659.7z" fill="url(#kRight)" stroke="#111110" stroke-width="1.0" stroke-linejoin="round"/><path d="M673.7 633.9L684.8 642.9L681.6 659.7L665.1 646.2z" fill="url(#kFront)" stroke="#111110" stroke-width="1.0" stroke-linejoin="round"/><path d="M673.7 633.9L684.8 642.9L700.0 635.1L688.9 626.2z" fill="#706d64" stroke="#111110" stroke-width="1.0" stroke-linejoin="round"/><path d="M703.3 657.8L718.5 649.8L725.4 661.4L700.0 674.7z" fill="url(#kRight)" stroke="#111110" stroke-width="1.0" stroke-linejoin="round"/><path d="M692.0 648.7L703.3 657.8L700.0 674.7L683.3 661.0z" fill="url(#kFront)" stroke="#111110" stroke-width="1.0" stroke-linejoin="round"/><path d="M692.0 648.7L703.3 657.8L718.5 649.8L707.2 640.8z" fill="#706d64" stroke="#111110" stroke-width="1.0" stroke-linejoin="round"/><path d="M722.0 672.9L737.3 664.8L744.1 676.4L718.7 689.9z" fill="url(#kRight)" stroke="#111110" stroke-width="1.0" stroke-linejoin="round"/><path d="M710.6 663.7L722.0 672.9L718.7 689.9L701.7 676.0z" fill="url(#kFront)" stroke="#111110" stroke-width="1.0" stroke-linejoin="round"/><path d="M710.6 663.7L722.0 672.9L737.3 664.8L725.9 655.7z" fill="#706d64" stroke="#111110" stroke-width="1.0" stroke-linejoin="round"/><path d="M741.1 688.2L756.4 680.0L763.2 691.6L737.7 705.3z" fill="url(#kRight)" stroke="#111110" stroke-width="1.0" stroke-linejoin="round"/><path d="M729.4 678.9L741.1 688.2L737.7 705.3L720.4 691.3z" fill="url(#kFront)" stroke="#111110" stroke-width="1.0" stroke-linejoin="round"/><path d="M729.4 678.9L741.1 688.2L756.4 680.0L744.7 670.8z" fill="#706d64" stroke="#111110" stroke-width="1.0" stroke-linejoin="round"/><path d="M760.4 703.8L775.7 695.5L782.5 707.1L757.0 721.0z" fill="url(#kRight)" stroke="#111110" stroke-width="1.0" stroke-linejoin="round"/><path d="M748.6 694.3L760.4 703.8L757.0 721.0L739.4 706.7z" fill="url(#kFront)" stroke="#111110" stroke-width="1.0" stroke-linejoin="round"/><path d="M748.6 694.3L760.4 703.8L775.7 695.5L763.9 686.0z" fill="#706d64" stroke="#111110" stroke-width="1.0" stroke-linejoin="round"/><path d="M779.9 719.6L795.3 711.1L802.1 722.8L776.5 736.9z" fill="url(#kRight)" stroke="#111110" stroke-width="1.0" stroke-linejoin="round"/><path d="M768.0 709.9L779.9 719.6L776.5 736.9L758.7 722.4z" fill="url(#kFront)" stroke="#111110" stroke-width="1.0" stroke-linejoin="round"/><path d="M768.0 709.9L779.9 719.6L795.3 711.1L783.4 701.6z" fill="#706d64" stroke="#111110" stroke-width="1.0" stroke-linejoin="round"/><path d="M799.8 735.6L815.3 727.0L822.0 738.7L796.3 753.0z" fill="url(#kRight)" stroke="#111110" stroke-width="1.0" stroke-linejoin="round"/><path d="M787.7 725.8L799.8 735.6L796.3 753.0L778.3 738.4z" fill="url(#kFront)" stroke="#111110" stroke-width="1.0" stroke-linejoin="round"/><path d="M787.7 725.8L799.8 735.6L815.3 727.0L803.1 717.3z" fill="#706d64" stroke="#111110" stroke-width="1.0" stroke-linejoin="round"/><path d="M820.0 751.9L835.5 743.2L842.2 754.9L816.5 769.4z" fill="url(#kRight)" stroke="#111110" stroke-width="1.0" stroke-linejoin="round"/><path d="M807.7 741.9L820.0 751.9L816.5 769.4L798.2 754.5z" fill="url(#kFront)" stroke="#111110" stroke-width="1.0" stroke-linejoin="round"/><path d="M807.7 741.9L820.0 751.9L835.5 743.2L823.2 733.3z" fill="#706d64" stroke="#111110" stroke-width="1.0" stroke-linejoin="round"/><path d="M840.5 768.4L856.0 759.6L862.7 771.3L837.0 786.1z" fill="url(#kRight)" stroke="#111110" stroke-width="1.0" stroke-linejoin="round"/><path d="M828.0 758.3L840.5 768.4L837.0 786.1L818.4 771.0z" fill="url(#kFront)" stroke="#111110" stroke-width="1.0" stroke-linejoin="round"/><path d="M828.0 758.3L840.5 768.4L856.0 759.6L843.5 749.6z" fill="#706d64" stroke="#111110" stroke-width="1.0" stroke-linejoin="round"/><path d="M861.3 785.2L876.9 776.2L883.6 788.0L857.7 803.0z" fill="url(#kRight)" stroke="#111110" stroke-width="1.0" stroke-linejoin="round"/><path d="M848.6 774.9L861.3 785.2L857.7 803.0L838.8 787.6z" fill="url(#kFront)" stroke="#111110" stroke-width="1.0" stroke-linejoin="round"/><path d="M848.6 774.9L861.3 785.2L876.9 776.2L864.2 766.1z" fill="#706d64" stroke="#111110" stroke-width="1.0" stroke-linejoin="round"/><path d="M928.0 838.9L943.7 829.5L950.3 841.4L924.2 857.1z" fill="url(#kRight)" stroke="#111110" stroke-width="1.0" stroke-linejoin="round"/><path d="M915.3 828.7L928.0 838.9L924.2 857.1L905.1 841.5z" fill="url(#kFront)" stroke="#111110" stroke-width="1.0" stroke-linejoin="round"/><path d="M915.3 828.7L928.0 838.9L943.7 829.5L930.9 819.4z" fill="#706d64" stroke="#111110" stroke-width="1.0" stroke-linejoin="round"/><path d="M951.4 857.8L967.1 848.2L973.7 860.1L947.6 876.1z" fill="url(#kRight)" stroke="#111110" stroke-width="1.0" stroke-linejoin="round"/><path d="M937.0 846.1L951.4 857.8L947.6 876.1L926.6 859.0z" fill="url(#kFront)" stroke="#111110" stroke-width="1.0" stroke-linejoin="round"/><path d="M937.0 846.1L951.4 857.8L967.1 848.2L952.6 836.7z" fill="#706d64" stroke="#111110" stroke-width="1.0" stroke-linejoin="round"/><path d="M986.9 886.4L1002.6 876.6L1009.2 888.5L983.0 904.9z" fill="url(#kRight)" stroke="#111110" stroke-width="1.0" stroke-linejoin="round"/><path d="M973.7 875.7L986.9 886.4L983.0 904.9L963.0 888.7z" fill="url(#kFront)" stroke="#111110" stroke-width="1.0" stroke-linejoin="round"/><path d="M973.7 875.7L986.9 886.4L1002.6 876.6L989.4 866.0z" fill="#706d64" stroke="#111110" stroke-width="1.0" stroke-linejoin="round"/><path d="M1010.6 905.5L1026.3 895.5L1032.8 907.5L1006.6 924.1z" fill="url(#kRight)" stroke="#111110" stroke-width="1.0" stroke-linejoin="round"/><path d="M997.1 894.6L1010.6 905.5L1006.6 924.1L986.3 907.6z" fill="url(#kFront)" stroke="#111110" stroke-width="1.0" stroke-linejoin="round"/><path d="M997.1 894.6L1010.6 905.5L1026.3 895.5L1012.8 884.7z" fill="#706d64" stroke="#111110" stroke-width="1.0" stroke-linejoin="round"/><path d="M1034.6 924.9L1050.4 914.7L1056.8 926.7L1030.6 943.7z" fill="url(#kRight)" stroke="#111110" stroke-width="1.0" stroke-linejoin="round"/><path d="M1020.9 913.8L1034.6 924.9L1030.6 943.7L1009.9 926.8z" fill="url(#kFront)" stroke="#111110" stroke-width="1.0" stroke-linejoin="round"/><path d="M1020.9 913.8L1034.6 924.9L1050.4 914.7L1036.7 903.8z" fill="#706d64" stroke="#111110" stroke-width="1.0" stroke-linejoin="round"/><path d="M1059.1 944.6L1074.9 934.3L1081.3 946.3L1055.0 963.5z" fill="url(#kRight)" stroke="#111110" stroke-width="1.0" stroke-linejoin="round"/><path d="M1045.1 933.3L1059.1 944.6L1055.0 963.5L1034.0 946.4z" fill="url(#kFront)" stroke="#111110" stroke-width="1.0" stroke-linejoin="round"/><path d="M1045.1 933.3L1059.1 944.6L1074.9 934.3L1060.9 923.1z" fill="#706d64" stroke="#111110" stroke-width="1.0" stroke-linejoin="round"/><path d="M913.2 811.5L921.8 806.4" fill="none" stroke="#111110" stroke-width="2.2" stroke-linejoin="round" stroke-linecap="round"/><path d="M978.8 858.7L982.5 856.4" fill="none" stroke="#111110" stroke-width="2.2" stroke-linejoin="round" stroke-linecap="round"/><path d="M1081.5 948.0L1090.3 942.3" fill="none" stroke="#111110" stroke-width="2.2" stroke-linejoin="round" stroke-linecap="round"/><path d="M953.8 874.0L978.8 858.7" fill="none" stroke="#111110" stroke-width="2.2" stroke-linejoin="round" stroke-linecap="round"/><path d="M888.4 826.1L913.2 811.5" fill="none" stroke="#111110" stroke-width="2.2" stroke-linejoin="round" stroke-linecap="round"/><path d="M1056.3 964.6L1081.5 948.0" fill="none" stroke="#111110" stroke-width="2.2" stroke-linejoin="round" stroke-linecap="round"/><path d="M903.2 832.9L953.8 874.0L943.3 880.5L892.7 839.2z" fill="url(#kbTop)"/><path d="M903.2 832.9L953.8 874.0" fill="none" stroke="#111110" stroke-width="2.2" stroke-linejoin="round" stroke-linecap="round"/><path d="M834.2 800.2L840.3 805.2L830.4 818.0L824.4 813.0z" fill="url(#kFront)" stroke="#111110" stroke-width="1.0" stroke-linejoin="round"/><path d="M837.7 838.7L879.4 814.3L886.1 826.1L834.0 856.9z" fill="url(#kRight)" stroke="#111110" stroke-width="1.0" stroke-linejoin="round"/><path d="M815.0 819.8L837.7 838.7L834.0 856.9L805.1 832.6z" fill="url(#kFront)" stroke="#111110" stroke-width="1.0" stroke-linejoin="round"/><path d="M815.0 819.8L837.7 838.7L879.4 814.3L850.5 790.9L834.2 800.2L840.3 805.2z" fill="#706d64" stroke="#111110" stroke-width="1.0" stroke-linejoin="round"/><path d="M598.0 608.1L614.2 600.1L621.2 611.5L594.9 624.6z" fill="url(#kRight)" stroke="#111110" stroke-width="1.0" stroke-linejoin="round"/><path d="M571.0 586.0L598.0 608.1L594.9 624.6L562.9 598.2z" fill="url(#kFront)" stroke="#111110" stroke-width="1.0" stroke-linejoin="round"/><path d="M571.0 586.0L598.0 608.1L614.2 600.1L587.2 578.2z" fill="#706d64" stroke="#111110" stroke-width="1.0" stroke-linejoin="round"/><path d="M614.2 621.5L630.5 613.3L637.5 624.7L611.1 638.1z" fill="url(#kRight)" stroke="#111110" stroke-width="1.0" stroke-linejoin="round"/><path d="M603.5 612.7L614.2 621.5L611.1 638.1L595.2 624.9z" fill="url(#kFront)" stroke="#111110" stroke-width="1.0" stroke-linejoin="round"/><path d="M603.5 612.7L614.2 621.5L630.5 613.3L619.8 604.6z" fill="#706d64" stroke="#111110" stroke-width="1.0" stroke-linejoin="round"/><path d="M632.0 636.0L648.3 627.8L655.3 639.2L628.8 652.7z" fill="url(#kRight)" stroke="#111110" stroke-width="1.0" stroke-linejoin="round"/><path d="M621.1 627.1L632.0 636.0L628.8 652.7L612.7 639.4z" fill="url(#kFront)" stroke="#111110" stroke-width="1.0" stroke-linejoin="round"/><path d="M621.1 627.1L632.0 636.0L648.3 627.8L637.5 618.9z" fill="#706d64" stroke="#111110" stroke-width="1.0" stroke-linejoin="round"/><path d="M650.0 650.8L666.4 642.4L673.4 653.9L646.8 667.6z" fill="url(#kRight)" stroke="#111110" stroke-width="1.0" stroke-linejoin="round"/><path d="M639.0 641.8L650.0 650.8L646.8 667.6L630.4 654.1z" fill="url(#kFront)" stroke="#111110" stroke-width="1.0" stroke-linejoin="round"/><path d="M639.0 641.8L650.0 650.8L666.4 642.4L655.4 633.5z" fill="#706d64" stroke="#111110" stroke-width="1.0" stroke-linejoin="round"/><path d="M668.3 665.8L684.7 657.3L691.7 668.8L665.0 682.8z" fill="url(#kRight)" stroke="#111110" stroke-width="1.0" stroke-linejoin="round"/><path d="M657.1 656.7L668.3 665.8L665.0 682.8L648.4 669.0z" fill="url(#kFront)" stroke="#111110" stroke-width="1.0" stroke-linejoin="round"/><path d="M657.1 656.7L668.3 665.8L684.7 657.3L673.5 648.2z" fill="#706d64" stroke="#111110" stroke-width="1.0" stroke-linejoin="round"/><path d="M686.9 681.0L703.3 672.4L710.3 684.0L683.5 698.1z" fill="url(#kRight)" stroke="#111110" stroke-width="1.0" stroke-linejoin="round"/><path d="M675.5 671.8L686.9 681.0L683.5 698.1L666.7 684.2z" fill="url(#kFront)" stroke="#111110" stroke-width="1.0" stroke-linejoin="round"/><path d="M675.5 671.8L686.9 681.0L703.3 672.4L692.0 663.2z" fill="#706d64" stroke="#111110" stroke-width="1.0" stroke-linejoin="round"/><path d="M705.7 696.5L722.2 687.7L729.1 699.3L702.3 713.7z" fill="url(#kRight)" stroke="#111110" stroke-width="1.0" stroke-linejoin="round"/><path d="M694.2 687.1L705.7 696.5L702.3 713.7L685.3 699.5z" fill="url(#kFront)" stroke="#111110" stroke-width="1.0" stroke-linejoin="round"/><path d="M694.2 687.1L705.7 696.5L722.2 687.7L710.7 678.4z" fill="#706d64" stroke="#111110" stroke-width="1.0" stroke-linejoin="round"/><path d="M724.8 712.2L741.4 703.3L748.3 714.9L721.4 729.5z" fill="url(#kRight)" stroke="#111110" stroke-width="1.0" stroke-linejoin="round"/><path d="M713.1 702.6L724.8 712.2L721.4 729.5L704.1 715.1z" fill="url(#kFront)" stroke="#111110" stroke-width="1.0" stroke-linejoin="round"/><path d="M713.1 702.6L724.8 712.2L741.4 703.3L729.7 693.8z" fill="#706d64" stroke="#111110" stroke-width="1.0" stroke-linejoin="round"/><path d="M744.2 728.1L760.8 719.1L767.7 730.7L740.8 745.5z" fill="url(#kRight)" stroke="#111110" stroke-width="1.0" stroke-linejoin="round"/><path d="M732.4 718.4L744.2 728.1L740.8 745.5L723.2 730.9z" fill="url(#kFront)" stroke="#111110" stroke-width="1.0" stroke-linejoin="round"/><path d="M732.4 718.4L744.2 728.1L760.8 719.1L748.9 709.4z" fill="#706d64" stroke="#111110" stroke-width="1.0" stroke-linejoin="round"/><path d="M763.9 744.3L780.5 735.1L787.4 746.8L760.4 761.8z" fill="url(#kRight)" stroke="#111110" stroke-width="1.0" stroke-linejoin="round"/><path d="M751.9 734.4L763.9 744.3L760.4 761.8L742.6 747.0z" fill="url(#kFront)" stroke="#111110" stroke-width="1.0" stroke-linejoin="round"/><path d="M751.9 734.4L763.9 744.3L780.5 735.1L768.5 725.3z" fill="#706d64" stroke="#111110" stroke-width="1.0" stroke-linejoin="round"/><path d="M783.9 760.7L800.6 751.4L807.4 763.1L780.4 778.3z" fill="url(#kRight)" stroke="#111110" stroke-width="1.0" stroke-linejoin="round"/><path d="M771.7 750.7L783.9 760.7L780.4 778.3L762.2 763.3z" fill="url(#kFront)" stroke="#111110" stroke-width="1.0" stroke-linejoin="round"/><path d="M771.7 750.7L783.9 760.7L800.6 751.4L788.3 741.4z" fill="#706d64" stroke="#111110" stroke-width="1.0" stroke-linejoin="round"/><path d="M804.2 777.3L820.9 767.9L827.8 779.6L800.6 795.1z" fill="url(#kRight)" stroke="#111110" stroke-width="1.0" stroke-linejoin="round"/><path d="M791.8 767.2L804.2 777.3L800.6 795.1L782.2 779.8z" fill="url(#kFront)" stroke="#111110" stroke-width="1.0" stroke-linejoin="round"/><path d="M791.8 767.2L804.2 777.3L820.9 767.9L808.5 757.8z" fill="#706d64" stroke="#111110" stroke-width="1.0" stroke-linejoin="round"/><path d="M824.8 794.3L841.6 784.7L848.4 796.4L821.2 812.1z" fill="url(#kRight)" stroke="#111110" stroke-width="1.0" stroke-linejoin="round"/><path d="M812.2 783.9L824.8 794.3L821.2 812.1L802.5 796.6z" fill="url(#kFront)" stroke="#111110" stroke-width="1.0" stroke-linejoin="round"/><path d="M812.2 783.9L824.8 794.3L841.6 784.7L829.0 774.4z" fill="#706d64" stroke="#111110" stroke-width="1.0" stroke-linejoin="round"/><path d="M958.6 904.0L975.6 893.4L982.3 905.4L954.7 922.7z" fill="url(#kRight)" stroke="#111110" stroke-width="1.0" stroke-linejoin="round"/><path d="M945.4 893.2L958.6 904.0L954.7 922.7L934.8 906.2z" fill="url(#kFront)" stroke="#111110" stroke-width="1.0" stroke-linejoin="round"/><path d="M945.4 893.2L958.6 904.0L975.6 893.4L962.4 882.7z" fill="#706d64" stroke="#111110" stroke-width="1.0" stroke-linejoin="round"/><path d="M982.2 923.4L999.2 912.6L1005.9 924.6L978.3 942.2z" fill="url(#kRight)" stroke="#111110" stroke-width="1.0" stroke-linejoin="round"/><path d="M968.8 912.4L982.2 923.4L978.3 942.2L958.0 925.4z" fill="url(#kFront)" stroke="#111110" stroke-width="1.0" stroke-linejoin="round"/><path d="M968.8 912.4L982.2 923.4L999.2 912.6L985.8 901.7z" fill="#706d64" stroke="#111110" stroke-width="1.0" stroke-linejoin="round"/><path d="M1006.2 943.1L1023.3 932.1L1029.9 944.2L1002.2 962.0z" fill="url(#kRight)" stroke="#111110" stroke-width="1.0" stroke-linejoin="round"/><path d="M992.5 931.9L1006.2 943.1L1002.2 962.0L981.6 944.9z" fill="url(#kFront)" stroke="#111110" stroke-width="1.0" stroke-linejoin="round"/><path d="M992.5 931.9L1006.2 943.1L1023.3 932.1L1009.6 921.0z" fill="#706d64" stroke="#111110" stroke-width="1.0" stroke-linejoin="round"/><path d="M1030.6 963.1L1047.7 952.0L1054.3 964.0L1026.6 982.2z" fill="url(#kRight)" stroke="#111110" stroke-width="1.0" stroke-linejoin="round"/><path d="M1016.7 951.7L1030.6 963.1L1026.6 982.2L1005.6 964.8z" fill="url(#kFront)" stroke="#111110" stroke-width="1.0" stroke-linejoin="round"/><path d="M1016.7 951.7L1030.6 963.1L1047.7 952.0L1033.8 940.7z" fill="#706d64" stroke="#111110" stroke-width="1.0" stroke-linejoin="round"/><path d="M863.2 841.0L888.4 826.1" fill="none" stroke="#111110" stroke-width="2.2" stroke-linejoin="round" stroke-linecap="round"/><path d="M1030.8 981.4L1056.3 964.6" fill="none" stroke="#111110" stroke-width="2.2" stroke-linejoin="round" stroke-linecap="round"/><path d="M557.3 607.7L573.4 599.8L580.6 611.2L554.2 624.2z" fill="url(#kRight)" stroke="#111110" stroke-width="1.0" stroke-linejoin="round"/><path d="M546.6 598.8L557.3 607.7L554.2 624.2L538.4 611.0z" fill="url(#kFront)" stroke="#111110" stroke-width="1.0" stroke-linejoin="round"/><path d="M546.6 598.8L557.3 607.7L573.4 599.8L562.7 590.9z" fill="#706d64" stroke="#111110" stroke-width="1.0" stroke-linejoin="round"/><path d="M572.4 620.3L588.6 612.3L595.7 623.7L569.3 636.9z" fill="url(#kRight)" stroke="#111110" stroke-width="1.0" stroke-linejoin="round"/><path d="M561.9 611.6L572.4 620.3L569.3 636.9L553.7 623.8z" fill="url(#kFront)" stroke="#111110" stroke-width="1.0" stroke-linejoin="round"/><path d="M561.9 611.6L572.4 620.3L588.6 612.3L578.1 603.6z" fill="#706d64" stroke="#111110" stroke-width="1.0" stroke-linejoin="round"/><path d="M593.7 638.1L609.9 629.9L617.1 641.4L590.5 654.8z" fill="url(#kRight)" stroke="#111110" stroke-width="1.0" stroke-linejoin="round"/><path d="M583.0 629.2L593.7 638.1L590.5 654.8L574.6 641.4z" fill="url(#kFront)" stroke="#111110" stroke-width="1.0" stroke-linejoin="round"/><path d="M583.0 629.2L593.7 638.1L609.9 629.9L599.2 621.1z" fill="#706d64" stroke="#111110" stroke-width="1.0" stroke-linejoin="round"/><path d="M611.4 652.9L627.8 644.6L634.9 656.1L608.2 669.7z" fill="url(#kRight)" stroke="#111110" stroke-width="1.0" stroke-linejoin="round"/><path d="M600.6 643.9L611.4 652.9L608.2 669.7L592.1 656.2z" fill="url(#kFront)" stroke="#111110" stroke-width="1.0" stroke-linejoin="round"/><path d="M600.6 643.9L611.4 652.9L627.8 644.6L616.9 635.7z" fill="#706d64" stroke="#111110" stroke-width="1.0" stroke-linejoin="round"/><path d="M629.5 667.9L645.8 659.5L652.9 671.1L626.2 684.9z" fill="url(#kRight)" stroke="#111110" stroke-width="1.0" stroke-linejoin="round"/><path d="M618.5 658.8L629.5 667.9L626.2 684.9L609.9 671.1z" fill="url(#kFront)" stroke="#111110" stroke-width="1.0" stroke-linejoin="round"/><path d="M618.5 658.8L629.5 667.9L645.8 659.5L634.8 650.4z" fill="#706d64" stroke="#111110" stroke-width="1.0" stroke-linejoin="round"/><path d="M647.8 683.2L664.2 674.7L671.2 686.2L644.5 700.3z" fill="url(#kRight)" stroke="#111110" stroke-width="1.0" stroke-linejoin="round"/><path d="M636.6 673.9L647.8 683.2L644.5 700.3L627.9 686.3z" fill="url(#kFront)" stroke="#111110" stroke-width="1.0" stroke-linejoin="round"/><path d="M636.6 673.9L647.8 683.2L664.2 674.7L653.0 665.4z" fill="#706d64" stroke="#111110" stroke-width="1.0" stroke-linejoin="round"/><path d="M666.3 698.7L682.8 690.0L689.8 701.6L663.0 715.9z" fill="url(#kRight)" stroke="#111110" stroke-width="1.0" stroke-linejoin="round"/><path d="M655.0 689.2L666.3 698.7L663.0 715.9L646.2 701.7z" fill="url(#kFront)" stroke="#111110" stroke-width="1.0" stroke-linejoin="round"/><path d="M655.0 689.2L666.3 698.7L682.8 690.0L671.4 680.7z" fill="#706d64" stroke="#111110" stroke-width="1.0" stroke-linejoin="round"/><path d="M685.2 714.4L701.6 705.6L708.7 717.2L681.8 731.7z" fill="url(#kRight)" stroke="#111110" stroke-width="1.0" stroke-linejoin="round"/><path d="M673.7 704.8L685.2 714.4L681.8 731.7L664.7 717.3z" fill="url(#kFront)" stroke="#111110" stroke-width="1.0" stroke-linejoin="round"/><path d="M673.7 704.8L685.2 714.4L701.6 705.6L690.1 696.1z" fill="#706d64" stroke="#111110" stroke-width="1.0" stroke-linejoin="round"/><path d="M704.3 730.3L720.8 721.4L727.9 733.1L700.9 747.7z" fill="url(#kRight)" stroke="#111110" stroke-width="1.0" stroke-linejoin="round"/><path d="M692.6 720.6L704.3 730.3L700.9 747.7L683.5 733.1z" fill="url(#kFront)" stroke="#111110" stroke-width="1.0" stroke-linejoin="round"/><path d="M692.6 720.6L704.3 730.3L720.8 721.4L709.1 711.8z" fill="#706d64" stroke="#111110" stroke-width="1.0" stroke-linejoin="round"/><path d="M723.7 746.5L740.3 737.5L747.3 749.2L720.3 764.1z" fill="url(#kRight)" stroke="#111110" stroke-width="1.0" stroke-linejoin="round"/><path d="M711.8 736.7L723.7 746.5L720.3 764.1L702.6 749.2z" fill="url(#kFront)" stroke="#111110" stroke-width="1.0" stroke-linejoin="round"/><path d="M711.8 736.7L723.7 746.5L740.3 737.5L728.4 727.7z" fill="#706d64" stroke="#111110" stroke-width="1.0" stroke-linejoin="round"/><path d="M743.4 763.0L760.0 753.8L767.0 765.5L739.9 780.6z" fill="url(#kRight)" stroke="#111110" stroke-width="1.0" stroke-linejoin="round"/><path d="M731.4 752.9L743.4 763.0L739.9 780.6L722.0 765.6z" fill="url(#kFront)" stroke="#111110" stroke-width="1.0" stroke-linejoin="round"/><path d="M731.4 752.9L743.4 763.0L760.0 753.8L748.0 743.8z" fill="#706d64" stroke="#111110" stroke-width="1.0" stroke-linejoin="round"/><path d="M763.4 779.7L780.1 770.3L787.1 782.1L759.9 797.4z" fill="url(#kRight)" stroke="#111110" stroke-width="1.0" stroke-linejoin="round"/><path d="M751.2 769.5L763.4 779.7L759.9 797.4L741.7 782.2z" fill="url(#kFront)" stroke="#111110" stroke-width="1.0" stroke-linejoin="round"/><path d="M751.2 769.5L763.4 779.7L780.1 770.3L767.8 760.2z" fill="#706d64" stroke="#111110" stroke-width="1.0" stroke-linejoin="round"/><path d="M783.7 796.6L800.4 787.2L807.4 799.0L780.2 814.5z" fill="url(#kRight)" stroke="#111110" stroke-width="1.0" stroke-linejoin="round"/><path d="M771.3 786.3L783.7 796.6L780.2 814.5L761.7 799.0z" fill="url(#kFront)" stroke="#111110" stroke-width="1.0" stroke-linejoin="round"/><path d="M771.3 786.3L783.7 796.6L800.4 787.2L788.0 776.9z" fill="#706d64" stroke="#111110" stroke-width="1.0" stroke-linejoin="round"/><path d="M804.4 813.9L821.1 804.2L828.1 816.1L800.8 831.9z" fill="url(#kRight)" stroke="#111110" stroke-width="1.0" stroke-linejoin="round"/><path d="M791.8 803.3L804.4 813.9L800.8 831.9L782.1 816.1z" fill="url(#kFront)" stroke="#111110" stroke-width="1.0" stroke-linejoin="round"/><path d="M791.8 803.3L804.4 813.9L821.1 804.2L808.5 793.8z" fill="#706d64" stroke="#111110" stroke-width="1.0" stroke-linejoin="round"/><path d="M884.0 880.3L900.9 870.1L907.8 882.0L880.2 898.8z" fill="url(#kRight)" stroke="#111110" stroke-width="1.0" stroke-linejoin="round"/><path d="M870.4 869.0L884.0 880.3L880.2 898.8L860.2 881.9z" fill="url(#kFront)" stroke="#111110" stroke-width="1.0" stroke-linejoin="round"/><path d="M870.4 869.0L884.0 880.3L900.9 870.1L887.3 858.8z" fill="#706d64" stroke="#111110" stroke-width="1.0" stroke-linejoin="round"/><path d="M932.2 920.5L949.2 909.9L956.0 921.9L928.3 939.3z" fill="url(#kRight)" stroke="#111110" stroke-width="1.0" stroke-linejoin="round"/><path d="M919.0 909.5L932.2 920.5L928.3 939.3L908.4 922.5z" fill="url(#kFront)" stroke="#111110" stroke-width="1.0" stroke-linejoin="round"/><path d="M919.0 909.5L932.2 920.5L949.2 909.9L936.0 899.0z" fill="#706d64" stroke="#111110" stroke-width="1.0" stroke-linejoin="round"/><path d="M955.8 940.1L972.8 929.4L979.5 941.4L951.8 959.1z" fill="url(#kRight)" stroke="#111110" stroke-width="1.0" stroke-linejoin="round"/><path d="M942.3 928.9L955.8 940.1L951.8 959.1L931.5 942.0z" fill="url(#kFront)" stroke="#111110" stroke-width="1.0" stroke-linejoin="round"/><path d="M942.3 928.9L955.8 940.1L972.8 929.4L959.3 918.3z" fill="#706d64" stroke="#111110" stroke-width="1.0" stroke-linejoin="round"/><path d="M979.7 960.1L996.7 949.2L1003.5 961.2L975.7 979.2z" fill="url(#kRight)" stroke="#111110" stroke-width="1.0" stroke-linejoin="round"/><path d="M966.1 948.7L979.7 960.1L975.7 979.2L955.1 961.8z" fill="url(#kFront)" stroke="#111110" stroke-width="1.0" stroke-linejoin="round"/><path d="M966.1 948.7L979.7 960.1L996.7 949.2L983.1 937.9z" fill="#706d64" stroke="#111110" stroke-width="1.0" stroke-linejoin="round"/><path d="M1004.1 980.4L1021.1 969.3L1027.8 981.4L1000.0 999.6z" fill="url(#kRight)" stroke="#111110" stroke-width="1.0" stroke-linejoin="round"/><path d="M990.2 968.9L1004.1 980.4L1000.0 999.6L979.0 982.0z" fill="url(#kFront)" stroke="#111110" stroke-width="1.0" stroke-linejoin="round"/><path d="M990.2 968.9L1004.1 980.4L1021.1 969.3L1007.2 957.8z" fill="#706d64" stroke="#111110" stroke-width="1.0" stroke-linejoin="round"/><path d="M914.4 879.0L915.2 878.5" fill="none" stroke="#111110" stroke-width="2.2" stroke-linejoin="round" stroke-linecap="round"/><path d="M888.8 894.5L914.4 879.0" fill="none" stroke="#111110" stroke-width="2.2" stroke-linejoin="round" stroke-linecap="round"/><path d="M837.7 856.1L863.2 841.0" fill="none" stroke="#111110" stroke-width="2.2" stroke-linejoin="round" stroke-linecap="round"/><path d="M1004.9 998.4L1030.8 981.4" fill="none" stroke="#111110" stroke-width="2.2" stroke-linejoin="round" stroke-linecap="round"/><path d="M560.2 643.3L575.6 635.6L582.9 647.0L557.0 660.0z" fill="url(#kRight)" stroke="#111110" stroke-width="1.0" stroke-linejoin="round"/><path d="M520.7 609.8L560.2 643.3L557.0 660.0L512.6 622.0z" fill="url(#kFront)" stroke="#111110" stroke-width="1.0" stroke-linejoin="round"/><path d="M520.7 609.8L560.2 643.3L575.6 635.6L536.1 602.4z" fill="#706d64" stroke="#111110" stroke-width="1.0" stroke-linejoin="round"/><path d="M577.3 657.8L592.8 650.0L600.0 661.5L574.1 674.7z" fill="url(#kRight)" stroke="#111110" stroke-width="1.0" stroke-linejoin="round"/><path d="M566.6 648.7L577.3 657.8L574.1 674.7L558.2 661.0z" fill="url(#kFront)" stroke="#111110" stroke-width="1.0" stroke-linejoin="round"/><path d="M566.6 648.7L577.3 657.8L592.8 650.0L582.0 641.0z" fill="#706d64" stroke="#111110" stroke-width="1.0" stroke-linejoin="round"/><path d="M595.1 672.9L610.7 665.0L617.9 676.5L591.9 689.9z" fill="url(#kRight)" stroke="#111110" stroke-width="1.0" stroke-linejoin="round"/><path d="M584.2 663.7L595.1 672.9L591.9 689.9L575.7 676.1z" fill="url(#kFront)" stroke="#111110" stroke-width="1.0" stroke-linejoin="round"/><path d="M584.2 663.7L595.1 672.9L610.7 665.0L599.7 655.8z" fill="#706d64" stroke="#111110" stroke-width="1.0" stroke-linejoin="round"/><path d="M613.2 688.2L628.8 680.2L636.0 691.8L609.9 705.3z" fill="url(#kRight)" stroke="#111110" stroke-width="1.0" stroke-linejoin="round"/><path d="M602.2 678.9L613.2 688.2L609.9 705.3L593.5 691.3z" fill="url(#kFront)" stroke="#111110" stroke-width="1.0" stroke-linejoin="round"/><path d="M602.2 678.9L613.2 688.2L628.8 680.2L617.7 670.9z" fill="#706d64" stroke="#111110" stroke-width="1.0" stroke-linejoin="round"/><path d="M631.5 703.8L647.2 695.6L654.4 707.2L628.2 721.0z" fill="url(#kRight)" stroke="#111110" stroke-width="1.0" stroke-linejoin="round"/><path d="M620.3 694.3L631.5 703.8L628.2 721.0L611.6 706.8z" fill="url(#kFront)" stroke="#111110" stroke-width="1.0" stroke-linejoin="round"/><path d="M620.3 694.3L631.5 703.8L647.2 695.6L635.9 686.2z" fill="#706d64" stroke="#111110" stroke-width="1.0" stroke-linejoin="round"/><path d="M650.2 719.6L665.8 711.3L673.0 722.9L646.8 736.9z" fill="url(#kRight)" stroke="#111110" stroke-width="1.0" stroke-linejoin="round"/><path d="M638.8 709.9L650.2 719.6L646.8 736.9L629.9 722.4z" fill="url(#kFront)" stroke="#111110" stroke-width="1.0" stroke-linejoin="round"/><path d="M638.8 709.9L650.2 719.6L665.8 711.3L654.4 701.7z" fill="#706d64" stroke="#111110" stroke-width="1.0" stroke-linejoin="round"/><path d="M669.1 735.6L684.8 727.2L692.0 738.9L665.7 753.1z" fill="url(#kRight)" stroke="#111110" stroke-width="1.0" stroke-linejoin="round"/><path d="M657.5 725.8L669.1 735.6L665.7 753.1L648.6 738.4z" fill="url(#kFront)" stroke="#111110" stroke-width="1.0" stroke-linejoin="round"/><path d="M657.5 725.8L669.1 735.6L684.8 727.2L673.2 717.5z" fill="#706d64" stroke="#111110" stroke-width="1.0" stroke-linejoin="round"/><path d="M688.3 751.9L704.0 743.3L711.2 755.0L684.8 769.4z" fill="url(#kRight)" stroke="#111110" stroke-width="1.0" stroke-linejoin="round"/><path d="M676.5 741.9L688.3 751.9L684.8 769.4L667.4 754.5z" fill="url(#kFront)" stroke="#111110" stroke-width="1.0" stroke-linejoin="round"/><path d="M676.5 741.9L688.3 751.9L704.0 743.3L692.3 733.5z" fill="#706d64" stroke="#111110" stroke-width="1.0" stroke-linejoin="round"/><path d="M707.8 768.4L723.6 759.7L730.7 771.5L704.3 786.1z" fill="url(#kRight)" stroke="#111110" stroke-width="1.0" stroke-linejoin="round"/><path d="M695.9 758.3L707.8 768.4L704.3 786.1L686.6 771.0z" fill="url(#kFront)" stroke="#111110" stroke-width="1.0" stroke-linejoin="round"/><path d="M695.9 758.3L707.8 768.4L723.6 759.7L711.6 749.7z" fill="#706d64" stroke="#111110" stroke-width="1.0" stroke-linejoin="round"/><path d="M727.5 785.2L743.4 776.4L750.5 788.2L724.0 803.0z" fill="url(#kRight)" stroke="#111110" stroke-width="1.0" stroke-linejoin="round"/><path d="M715.5 774.9L727.5 785.2L724.0 803.0L706.1 787.6z" fill="url(#kFront)" stroke="#111110" stroke-width="1.0" stroke-linejoin="round"/><path d="M715.5 774.9L727.5 785.2L743.4 776.4L731.3 766.2z" fill="#706d64" stroke="#111110" stroke-width="1.0" stroke-linejoin="round"/><path d="M747.6 802.2L763.5 793.3L770.7 805.1L744.1 820.2z" fill="url(#kRight)" stroke="#111110" stroke-width="1.0" stroke-linejoin="round"/><path d="M735.4 791.8L747.6 802.2L744.1 820.2L725.9 804.6z" fill="url(#kFront)" stroke="#111110" stroke-width="1.0" stroke-linejoin="round"/><path d="M735.4 791.8L747.6 802.2L763.5 793.3L751.2 783.0z" fill="#706d64" stroke="#111110" stroke-width="1.0" stroke-linejoin="round"/><path d="M768.1 819.5L784.0 810.5L791.1 822.3L764.5 837.6z" fill="url(#kRight)" stroke="#111110" stroke-width="1.0" stroke-linejoin="round"/><path d="M755.6 809.0L768.1 819.5L764.5 837.6L746.0 821.8z" fill="url(#kFront)" stroke="#111110" stroke-width="1.0" stroke-linejoin="round"/><path d="M755.6 809.0L768.1 819.5L784.0 810.5L771.5 800.0z" fill="#706d64" stroke="#111110" stroke-width="1.0" stroke-linejoin="round"/><path d="M809.9 855.0L825.9 845.6L833.0 857.5L806.2 873.3z" fill="url(#kRight)" stroke="#111110" stroke-width="1.0" stroke-linejoin="round"/><path d="M777.4 827.5L809.9 855.0L806.2 873.3L767.6 840.3z" fill="url(#kFront)" stroke="#111110" stroke-width="1.0" stroke-linejoin="round"/><path d="M777.4 827.5L809.9 855.0L825.9 845.6L793.4 818.3z" fill="#706d64" stroke="#111110" stroke-width="1.0" stroke-linejoin="round"/><path d="M835.6 876.8L851.6 867.2L858.7 879.1L831.8 895.3z" fill="url(#kRight)" stroke="#111110" stroke-width="1.0" stroke-linejoin="round"/><path d="M824.3 867.2L835.6 876.8L831.8 895.3L814.2 880.2z" fill="url(#kFront)" stroke="#111110" stroke-width="1.0" stroke-linejoin="round"/><path d="M824.3 867.2L835.6 876.8L851.6 867.2L840.3 857.8z" fill="#706d64" stroke="#111110" stroke-width="1.0" stroke-linejoin="round"/><path d="M857.7 895.6L873.8 885.8L880.8 897.8L853.9 914.2z" fill="url(#kRight)" stroke="#111110" stroke-width="1.0" stroke-linejoin="round"/><path d="M845.4 885.2L857.7 895.6L853.9 914.2L835.2 898.1z" fill="url(#kFront)" stroke="#111110" stroke-width="1.0" stroke-linejoin="round"/><path d="M845.4 885.2L857.7 895.6L873.8 885.8L861.5 875.5z" fill="#706d64" stroke="#111110" stroke-width="1.0" stroke-linejoin="round"/><path d="M879.1 913.7L895.3 903.9L902.3 915.8L875.3 932.5z" fill="url(#kRight)" stroke="#111110" stroke-width="1.0" stroke-linejoin="round"/><path d="M868.0 904.3L879.1 913.7L875.3 932.5L857.5 917.3z" fill="url(#kFront)" stroke="#111110" stroke-width="1.0" stroke-linejoin="round"/><path d="M868.0 904.3L879.1 913.7L895.3 903.9L884.1 894.5z" fill="#706d64" stroke="#111110" stroke-width="1.0" stroke-linejoin="round"/><path d="M906.2 936.7L922.4 926.6L929.3 938.6L902.3 955.6z" fill="url(#kRight)" stroke="#111110" stroke-width="1.0" stroke-linejoin="round"/><path d="M893.0 925.5L906.2 936.7L902.3 955.6L882.4 938.6z" fill="url(#kFront)" stroke="#111110" stroke-width="1.0" stroke-linejoin="round"/><path d="M893.0 925.5L906.2 936.7L922.4 926.6L909.2 915.6z" fill="#706d64" stroke="#111110" stroke-width="1.0" stroke-linejoin="round"/><path d="M929.7 956.6L945.9 946.4L952.8 958.4L925.7 975.7z" fill="url(#kRight)" stroke="#111110" stroke-width="1.0" stroke-linejoin="round"/><path d="M916.3 945.3L929.7 956.6L925.7 975.7L905.5 958.4z" fill="url(#kFront)" stroke="#111110" stroke-width="1.0" stroke-linejoin="round"/><path d="M916.3 945.3L929.7 956.6L945.9 946.4L932.5 935.1z" fill="#706d64" stroke="#111110" stroke-width="1.0" stroke-linejoin="round"/><path d="M953.6 976.9L969.8 966.4L976.7 978.5L949.6 996.1z" fill="url(#kRight)" stroke="#111110" stroke-width="1.0" stroke-linejoin="round"/><path d="M940.0 965.3L953.6 976.9L949.6 996.1L929.0 978.5z" fill="url(#kFront)" stroke="#111110" stroke-width="1.0" stroke-linejoin="round"/><path d="M940.0 965.3L953.6 976.9L969.8 966.4L956.2 955.0z" fill="#706d64" stroke="#111110" stroke-width="1.0" stroke-linejoin="round"/><path d="M977.9 997.5L994.2 986.9L1001.0 999.0L973.8 1016.8z" fill="url(#kRight)" stroke="#111110" stroke-width="1.0" stroke-linejoin="round"/><path d="M964.1 985.7L977.9 997.5L973.8 1016.8L952.9 998.9z" fill="url(#kFront)" stroke="#111110" stroke-width="1.0" stroke-linejoin="round"/><path d="M964.1 985.7L977.9 997.5L994.2 986.9L980.3 975.2z" fill="#706d64" stroke="#111110" stroke-width="1.0" stroke-linejoin="round"/><path d="M900.9 916.0L908.7 911.2" fill="none" stroke="#111110" stroke-width="2.2" stroke-linejoin="round" stroke-linecap="round"/><path d="M811.8 871.4L837.7 856.1" fill="none" stroke="#111110" stroke-width="2.2" stroke-linejoin="round" stroke-linecap="round"/><path d="M978.6 1015.7L1004.9 998.4" fill="none" stroke="#111110" stroke-width="2.2" stroke-linejoin="round" stroke-linecap="round"/><path d="M874.8 932.1L900.9 916.0" fill="none" stroke="#111110" stroke-width="2.2" stroke-linejoin="round" stroke-linecap="round"/><path d="M509.4 614.0L516.0 619.5L505.5 624.7L499.0 619.1z" fill="url(#kbTop)"/><path d="M509.4 614.0L516.0 619.5" fill="none" stroke="#111110" stroke-width="2.2" stroke-linejoin="round" stroke-linecap="round"/><path d="M531.3 654.0L546.9 646.2L554.3 657.7L528.2 670.9z" fill="url(#kRight)" stroke="#111110" stroke-width="1.0" stroke-linejoin="round"/><path d="M521.6 645.7L531.3 654.0L528.2 670.9L513.4 658.0z" fill="url(#kFront)" stroke="#111110" stroke-width="1.0" stroke-linejoin="round"/><path d="M521.6 645.7L531.3 654.0L546.9 646.2L537.3 637.9z" fill="#706d64" stroke="#111110" stroke-width="1.0" stroke-linejoin="round"/><path d="M549.9 670.0L565.5 662.1L572.9 673.6L546.7 687.0z" fill="url(#kRight)" stroke="#111110" stroke-width="1.0" stroke-linejoin="round"/><path d="M539.4 661.0L549.9 670.0L546.7 687.0L531.0 673.3z" fill="url(#kFront)" stroke="#111110" stroke-width="1.0" stroke-linejoin="round"/><path d="M539.4 661.0L549.9 670.0L565.5 662.1L555.0 653.1z" fill="#706d64" stroke="#111110" stroke-width="1.0" stroke-linejoin="round"/><path d="M631.4 740.4L647.3 731.9L654.6 743.6L628.0 757.8z" fill="url(#kRight)" stroke="#111110" stroke-width="1.0" stroke-linejoin="round"/><path d="M556.3 675.6L631.4 740.4L628.0 757.8L547.9 688.0z" fill="url(#kFront)" stroke="#111110" stroke-width="1.0" stroke-linejoin="round"/><path d="M556.3 675.6L631.4 740.4L647.3 731.9L572.0 667.6z" fill="#706d64" stroke="#111110" stroke-width="1.0" stroke-linejoin="round"/><path d="M680.3 782.6L696.3 773.8L703.6 785.5L676.8 800.3z" fill="url(#kRight)" stroke="#111110" stroke-width="1.0" stroke-linejoin="round"/><path d="M639.4 747.3L680.3 782.6L676.8 800.3L630.4 759.9z" fill="url(#kFront)" stroke="#111110" stroke-width="1.0" stroke-linejoin="round"/><path d="M639.4 747.3L680.3 782.6L696.3 773.8L655.3 738.8z" fill="#706d64" stroke="#111110" stroke-width="1.0" stroke-linejoin="round"/><path d="M698.6 798.3L714.6 789.4L721.9 801.2L695.1 816.2z" fill="url(#kRight)" stroke="#111110" stroke-width="1.0" stroke-linejoin="round"/><path d="M688.3 789.4L698.6 798.3L695.1 816.2L678.9 802.1z" fill="url(#kFront)" stroke="#111110" stroke-width="1.0" stroke-linejoin="round"/><path d="M688.3 789.4L698.6 798.3L714.6 789.4L704.3 780.6z" fill="#706d64" stroke="#111110" stroke-width="1.0" stroke-linejoin="round"/><path d="M719.8 816.7L735.9 807.6L743.2 819.4L716.3 834.7z" fill="url(#kRight)" stroke="#111110" stroke-width="1.0" stroke-linejoin="round"/><path d="M708.6 806.9L719.8 816.7L716.3 834.7L699.1 819.7z" fill="url(#kFront)" stroke="#111110" stroke-width="1.0" stroke-linejoin="round"/><path d="M708.6 806.9L719.8 816.7L735.9 807.6L724.7 798.0z" fill="#706d64" stroke="#111110" stroke-width="1.0" stroke-linejoin="round"/><path d="M878.8 953.8L895.2 943.6L902.3 955.6L874.9 972.8z" fill="url(#kRight)" stroke="#111110" stroke-width="1.0" stroke-linejoin="round"/><path d="M865.7 942.5L878.8 953.8L874.9 972.8L855.1 955.6z" fill="url(#kFront)" stroke="#111110" stroke-width="1.0" stroke-linejoin="round"/><path d="M865.7 942.5L878.8 953.8L895.2 943.6L882.0 932.3z" fill="#706d64" stroke="#111110" stroke-width="1.0" stroke-linejoin="round"/><path d="M902.2 974.0L918.6 963.6L925.7 975.7L898.2 993.2z" fill="url(#kRight)" stroke="#111110" stroke-width="1.0" stroke-linejoin="round"/><path d="M888.9 962.5L902.2 974.0L898.2 993.2L878.1 975.6z" fill="url(#kFront)" stroke="#111110" stroke-width="1.0" stroke-linejoin="round"/><path d="M888.9 962.5L902.2 974.0L918.6 963.6L905.3 952.2z" fill="#706d64" stroke="#111110" stroke-width="1.0" stroke-linejoin="round"/><path d="M926.0 994.6L942.5 984.0L949.6 996.1L922.0 1013.9z" fill="url(#kRight)" stroke="#111110" stroke-width="1.0" stroke-linejoin="round"/><path d="M912.5 982.8L926.0 994.6L922.0 1013.9L901.5 996.0z" fill="url(#kFront)" stroke="#111110" stroke-width="1.0" stroke-linejoin="round"/><path d="M912.5 982.8L926.0 994.6L942.5 984.0L928.9 972.4z" fill="#706d64" stroke="#111110" stroke-width="1.0" stroke-linejoin="round"/><path d="M950.3 1015.5L966.8 1004.7L973.8 1016.8L946.2 1034.9z" fill="url(#kRight)" stroke="#111110" stroke-width="1.0" stroke-linejoin="round"/><path d="M936.5 1003.6L950.3 1015.5L946.2 1034.9L925.4 1016.8z" fill="url(#kFront)" stroke="#111110" stroke-width="1.0" stroke-linejoin="round"/><path d="M936.5 1003.6L950.3 1015.5L966.8 1004.7L953.0 992.9z" fill="#706d64" stroke="#111110" stroke-width="1.0" stroke-linejoin="round"/><path d="M951.9 1033.2L978.6 1015.7" fill="none" stroke="#111110" stroke-width="2.2" stroke-linejoin="round" stroke-linecap="round"/><path d="M848.3 948.4L874.8 932.1" fill="none" stroke="#111110" stroke-width="2.2" stroke-linejoin="round" stroke-linecap="round"/><path d="M852.9 947.2L951.9 1033.2L946.0 1037.4L847.0 951.1z" fill="url(#kbTop)"/><path d="M852.9 947.2L951.9 1033.2" fill="none" stroke="#111110" stroke-width="2.2" stroke-linejoin="round" stroke-linecap="round"/><path d="M486.8 633.7L848.3 948.4L837.2 956.7L476.4 640.2z" fill="url(#kbPalm)"/><path d="M486.8 633.7L848.3 948.4" fill="none" stroke="#111110" stroke-width="2.2" stroke-linejoin="round" stroke-linecap="round"/></g>
<ellipse cx="1872" cy="236" rx="30" ry="13" fill="#000" opacity=".13" filter="url(#blur6)"/><path d="M1830.3 181.3L1866.3 165.8L1899.8 185.5L1861.5 205.9z" fill="#f1f1f1" opacity=".85"/><path d="M1830.3 181.3L1861.5 205.9L1862.7 243.7L1833.3 219.7z" fill="#e6e6e6" opacity=".85"/><path d="M1861.5 205.9L1899.8 185.5L1895.6 221.5L1862.7 243.7z" fill="#ececec" opacity=".85"/><path d="M1830.3 181.3L1866.3 165.8L1899.8 185.5L1861.5 205.9zM1830.3 181.3L1861.5 205.9L1862.7 243.7L1833.3 219.7zM1861.5 205.9L1899.8 185.5L1895.6 221.5L1862.7 243.7z" fill="none" stroke="#666" stroke-width=".9" stroke-dasharray="4 2.500"/><path d="M1828 176L1833.300 219.700" stroke="#4a4aff" stroke-width="2" opacity=".85"/><path d="M1833.300 219.700L1868 250.200" stroke="#f07070" stroke-width="2" opacity=".75"/><text x="1822" y="174" font-size="14.500" fill="#5858ff" font-family="Liberation Sans,Noto Sans CJK JP,sans-serif">Z</text><text x="1868" y="260" font-size="12" fill="#ff6868" font-family="Liberation Sans,Noto Sans CJK JP,sans-serif">X</text><text transform="matrix(.88 .46 -.9 .42 1866.500 190.500)" x="-9" y="6" font-size="17" fill="#707784" font-family="Liberation Sans,Noto Sans CJK JP,sans-serif">上</text><text transform="matrix(.80 .62 .04 1.05 1847 214)" x="-9" y="6" font-size="17" fill="#707784" font-family="Liberation Sans,Noto Sans CJK JP,sans-serif">前</text><text transform="matrix(.9 -.52 -.03 1.05 1880.500 216)" x="-9" y="6" font-size="17" fill="#707784" font-family="Liberation Sans,Noto Sans CJK JP,sans-serif">右</text><rect x="850" y="1130" width="237" height="24" fill="#f0f0f0" opacity=".95"/><path d="M861 1131.500v19M861 1131l-2.500 4M861 1131l2.500 4" stroke="#333" stroke-width="1.200" fill="none"/><ellipse cx="861" cy="1143.500" rx="6.500" ry="3" fill="none" stroke="#333" stroke-width="1.300"/><path d="M855.500 1144.500l-2.500 2.500 4 .8z" fill="#333"/><path d="M874.5 1139.500h5.600l-2.800 3.800z" fill="#333"/><rect x="887" y="1138.500" width="14" height="10.500" fill="#e6e6e6" stroke="#333" stroke-width="1.200"/><rect x="889.500" y="1141.500" width="9" height="4.500" fill="#bbb" stroke="#333" stroke-width=".9"/><path d="M887.500 1138.500l3.500-4 1.500 2.500 3-3.500 1.500 2.500 3-1.500" fill="none" stroke="#333" stroke-width="1"/><path d="M914.500 1142.500c-1.500-2-3-1-2 .5l3 5c1 2 2.500 3 4.500 3h2.500c2.500 0 4-2 4.500-5l.8-6c.2-1.500-1.600-1.800-2-.3l-.8 3.500.3-7c0-1.600-2-1.600-2.200 0l-.5 6-.4-8c-.2-1.500-2-1.500-2.100 0l-.1 8-1.200-6.500c-.4-1.500-2.200-1.200-2 .4l1 9z" fill="#fff" stroke="#333" stroke-width="1" stroke-linejoin="round"/><circle cx="944.500" cy="1140.500" r="4.800" fill="#d8e6ee" stroke="#333" stroke-width="1.300"/><path d="M948 1144.500l5 5" stroke="#333" stroke-width="2.600"/><path d="M950.500 1134.500h4.500M952.700 1132.300v4.400M950.500 1139h4.500" stroke="#333" stroke-width="1"/><rect x="964.500" y="1134" width="15" height="15" fill="none" stroke="#333" stroke-width=".9" stroke-dasharray="2 1.500"/><circle cx="971" cy="1140.500" r="5.500" fill="#dbe8ee" stroke="#333" stroke-width="1.300"/><path d="M975 1145l4.500 4.500" stroke="#333" stroke-width="2.800"/><path d="M985.5 1139.500h5.600l-2.800 3.800z" fill="#333"/><rect x="998" y="1135" width="15" height="11" rx="1" fill="#cfcfcf" stroke="#555" stroke-width="1.100"/><rect x="1000" y="1137" width="11" height="7" fill="#6aa7ea"/><path d="M1003.500 1146v2.500h-2.500v1.300h9v-1.300h-2.500v-2.500z" fill="#555"/><path d="M1016 1139.500h5.600l-2.800 3.800z" fill="#333"/><rect x="1028.500" y="1134.500" width="15" height="15" fill="#ddd" stroke="#444" stroke-width="1"/><path d="M1032.300 1134.500v15M1036 1134.500v15M1039.800 1134.500v15M1028.500 1138.300h15M1028.500 1142h15M1028.500 1145.800h15" stroke="#444" stroke-width=".9"/><path d="M1047 1139.500h5.600l-2.800 3.800z" fill="#333"/><rect x="1059" y="1135" width="16" height="14" rx="1" fill="#3f5fa8"/><rect x="1060.800" y="1136.800" width="5.400" height="4.400" fill="#8fb8f2"/><rect x="1067.800" y="1136.800" width="5.400" height="4.400" fill="#8fb8f2"/><rect x="1060.800" y="1142.800" width="5.400" height="4.400" fill="#8fb8f2"/><rect x="1067.800" y="1142.800" width="5.400" height="4.400" fill="#8fb8f2"/><path d="M1077.5 1139.500h5.600l-2.800 3.800z" fill="#333"/>
</svg>
<div class="abs" style="left:12px;top:144px;width:300px;height:25px;background:#f0f0f0;border:1px solid #c8c8c8"></div>
<div class="abs" style="left:37px;top:150px;font-size:11px;line-height:16px;color:#666;white-space:nowrap"><span class="nr"><span class="sq" style="width:33.00px;transform:scaleX(0.7500)">ブラウザ</span></span></div>
<div class="abs" style="left:12px;top:1131px;width:300px;height:24px;background:#f0f0f0;border:1px solid #c8c8c8"></div>
<div class="abs" style="left:36.500px;top:1136px;font-size:11px;line-height:16px;color:#666;white-space:nowrap"><span class="nr"><span class="sq" style="width:32.00px;transform:scaleX(0.7273)">コメント</span></span></div>
<div class="tree" style="left:66px;top:174.2px;width:116.1px"><span class="t nr" style="left:28px"><span class="sq" style="width:47.91px;transform:scaleX(0.7259)">ドキュメント</span><span class="sq" style="width:30.69px;transform:scaleX(0.9300)">の設定</span></span></div>
<div class="tree" style="left:66px;top:198.2px;width:124.5px"><span class="t nr" style="left:33.599999999999994px"><span class="sq" style="width:61.38px;transform:scaleX(0.9300)">名前の付いた</span><span class="sq" style="width:20.02px;transform:scaleX(0.6067)">ビュー</span></span></div>
<div class="tree" style="left:66px;top:222.2px;width:89.0px"><span class="t nr" style="left:58px"><span class="sq" style="width:21.50px;transform:scaleX(0.9773)">原点</span></span></div>
<div class="tree" style="left:66px;top:246.2px;width:92.5px"><span class="t nr" style="left:58px"><span class="sq" style="width:25.00px;transform:scaleX(0.7756)">ボディ</span></span></div>
<div class="tree" style="left:84px;top:270.2px;width:123.5px"><span class="t nr" style="left:58px"><span class="sq" style="width:39.50px;transform:scaleX(0.7182)">キーボード</span> (8)</span></div>
<div class="tree" style="left:102px;top:294.2px;width:151.0px"><span class="t nr" style="left:58px"><span class="sq" style="width:45.27px;transform:scaleX(0.6858)">キーボード・</span><span class="sq" style="width:20.46px;transform:scaleX(0.9300)">上面</span><span class="sq" style="width:7.54px;transform:scaleX(0.6858)">・</span><span class="sq" style="width:10.23px;transform:scaleX(0.9300)">前</span></span></div>
<div class="tree" style="left:102px;top:318.2px;width:151.0px"><span class="t nr" style="left:58px"><span class="sq" style="width:45.27px;transform:scaleX(0.6858)">キーボード・</span><span class="sq" style="width:20.46px;transform:scaleX(0.9300)">上面</span><span class="sq" style="width:7.54px;transform:scaleX(0.6858)">・</span><span class="sq" style="width:10.23px;transform:scaleX(0.9300)">後</span></span></div>
<div class="tree" style="left:102px;top:342.2px;width:151.0px"><span class="t nr" style="left:58px"><span class="sq" style="width:45.27px;transform:scaleX(0.6858)">キーボード・</span><span class="sq" style="width:20.46px;transform:scaleX(0.9300)">底面</span><span class="sq" style="width:7.54px;transform:scaleX(0.6858)">・</span><span class="sq" style="width:10.23px;transform:scaleX(0.9300)">前</span></span></div>
<div class="tree" style="left:102px;top:366.2px;width:152.0px"><span class="t nr" style="left:58px"><span class="sq" style="width:46.12px;transform:scaleX(0.6988)">キーボード・</span><span class="sq" style="width:20.46px;transform:scaleX(0.9300)">底面</span><span class="sq" style="width:7.69px;transform:scaleX(0.6988)">・</span><span class="sq" style="width:10.23px;transform:scaleX(0.9300)">後</span></span></div>
<div class="tree" style="left:102px;top:390.2px;width:123.5px"><span class="t nr" style="left:58px"><span class="sq" style="width:39.50px;transform:scaleX(0.7182)">キーボード</span> (1)</span></div>
<div class="tree" style="left:102px;top:414.2px;width:137.5px"><span class="t nr" style="left:58px"><span class="sq" style="width:45.98px;transform:scaleX(0.6967)">キーボード・</span><span class="sq" style="width:10.23px;transform:scaleX(0.9300)">脚</span><span class="sq" style="width:7.66px;transform:scaleX(0.6967)">・</span>1</span></div>
<div class="tree" style="left:102px;top:438.2px;width:137.5px"><span class="t nr" style="left:58px"><span class="sq" style="width:45.98px;transform:scaleX(0.6967)">キーボード・</span><span class="sq" style="width:10.23px;transform:scaleX(0.9300)">脚</span><span class="sq" style="width:7.66px;transform:scaleX(0.6967)">・</span>2</span></div>
<div class="tree" style="left:102px;top:462.2px;width:145.5px"><span class="t nr" style="left:58px"><span class="sq" style="width:78.00px;transform:scaleX(0.7119)">キーボード・コネクタ</span></span></div>
<div class="tree" style="left:84px;top:486.2px;width:136.5px"><span class="t nr" style="left:58px"><span class="sq" style="width:30.54px;transform:scaleX(0.7064)">ボディ・</span><span class="sq" style="width:20.46px;transform:scaleX(0.9300)">上面</span><span class="sq" style="width:7.77px;transform:scaleX(0.7064)">・</span><span class="sq" style="width:10.23px;transform:scaleX(0.9300)">上</span></span></div>
<div class="tree" style="left:84px;top:510.2px;width:136.5px"><span class="t nr" style="left:58px"><span class="sq" style="width:30.54px;transform:scaleX(0.7064)">ボディ・</span><span class="sq" style="width:20.46px;transform:scaleX(0.9300)">上面</span><span class="sq" style="width:7.77px;transform:scaleX(0.7064)">・</span><span class="sq" style="width:10.23px;transform:scaleX(0.9300)">左</span></span></div>
<div class="tree" style="left:84px;top:534.2px;width:136.5px"><span class="t nr" style="left:58px"><span class="sq" style="width:30.54px;transform:scaleX(0.7064)">ボディ・</span><span class="sq" style="width:20.46px;transform:scaleX(0.9300)">上面</span><span class="sq" style="width:7.77px;transform:scaleX(0.7064)">・</span><span class="sq" style="width:10.23px;transform:scaleX(0.9300)">右</span></span></div>
<div class="tree" style="left:84px;top:558.2px;width:136.5px"><span class="t nr" style="left:58px"><span class="sq" style="width:30.54px;transform:scaleX(0.7064)">ボディ・</span><span class="sq" style="width:20.46px;transform:scaleX(0.9300)">底面</span><span class="sq" style="width:7.77px;transform:scaleX(0.7064)">・</span><span class="sq" style="width:10.23px;transform:scaleX(0.9300)">下</span></span></div>
<div class="tree" style="left:84px;top:582.2px;width:136.5px"><span class="t nr" style="left:58px"><span class="sq" style="width:30.54px;transform:scaleX(0.7064)">ボディ・</span><span class="sq" style="width:20.46px;transform:scaleX(0.9300)">底面</span><span class="sq" style="width:7.77px;transform:scaleX(0.7064)">・</span><span class="sq" style="width:10.23px;transform:scaleX(0.9300)">左</span></span></div>
<div class="tree" style="left:84px;top:606.2px;width:136.5px"><span class="t nr" style="left:58px"><span class="sq" style="width:30.54px;transform:scaleX(0.7064)">ボディ・</span><span class="sq" style="width:20.46px;transform:scaleX(0.9300)">底面</span><span class="sq" style="width:7.77px;transform:scaleX(0.7064)">・</span><span class="sq" style="width:10.23px;transform:scaleX(0.9300)">右</span></span></div>
<div class="tree" style="left:84px;top:630.2px;width:126.5px"><span class="t nr" style="left:58px"><span class="sq" style="width:59.00px;transform:scaleX(0.7662)">フロントパネル</span></span></div>
<div class="tree" style="left:84px;top:654.2px;width:120.0px"><span class="t nr" style="left:58px"><span class="sq" style="width:32.04px;transform:scaleX(0.7411)">ボディ・</span><span class="sq" style="width:20.46px;transform:scaleX(0.9300)">背面</span></span></div>
<div class="tree" style="left:84px;top:678.2px;width:99.5px"><span class="t nr" style="left:58px"><span class="sq" style="width:32.00px;transform:scaleX(0.7273)">マウンタ</span></span></div>
<div class="tree" style="left:84px;top:702.2px;width:138.2px"><span class="t nr" style="left:58px"><span class="sq" style="width:20.46px;transform:scaleX(0.9300)">内部</span><span class="sq" style="width:40.01px;transform:scaleX(0.7318)">フレーム・</span><span class="sq" style="width:10.23px;transform:scaleX(0.9300)">前</span></span></div>
<div class="tree" style="left:84px;top:726.2px;width:138.2px"><span class="t nr" style="left:58px"><span class="sq" style="width:20.46px;transform:scaleX(0.9300)">内部</span><span class="sq" style="width:40.01px;transform:scaleX(0.7318)">フレーム・</span><span class="sq" style="width:10.23px;transform:scaleX(0.9300)">左</span></span></div>
<div class="tree" style="left:84px;top:750.2px;width:138.2px"><span class="t nr" style="left:58px"><span class="sq" style="width:20.46px;transform:scaleX(0.9300)">内部</span><span class="sq" style="width:40.01px;transform:scaleX(0.7318)">フレーム・</span><span class="sq" style="width:10.23px;transform:scaleX(0.9300)">右</span></span></div>
<div class="tree" style="left:84px;top:774.2px;width:123.5px"><span class="t nr" style="left:58px">FDD1<span class="sq" style="width:27.27px;transform:scaleX(0.6197)">・レバー</span></span></div>
<div class="tree" style="left:84px;top:798.2px;width:118.5px"><span class="t nr" style="left:58px"><span class="sq" style="width:25.76px;transform:scaleX(0.8965)">FDD1</span><span class="sq" style="width:6.05px;transform:scaleX(0.5500)">・</span><span class="sq" style="width:19.19px;transform:scaleX(0.8965)">LED</span></span></div>
<div class="tree" style="left:84px;top:822.2px;width:123.5px"><span class="t nr" style="left:58px">FDD2<span class="sq" style="width:27.27px;transform:scaleX(0.6197)">・レバー</span></span></div>
<div class="tree" style="left:84px;top:846.2px;width:118.5px"><span class="t nr" style="left:58px"><span class="sq" style="width:25.76px;transform:scaleX(0.8965)">FDD2</span><span class="sq" style="width:6.05px;transform:scaleX(0.5500)">・</span><span class="sq" style="width:19.19px;transform:scaleX(0.8965)">LED</span></span></div>
<div class="tree" style="left:84px;top:870.2px;width:187.5px"><span class="t nr" style="left:58px"><span class="sq" style="width:87.00px;transform:scaleX(0.7249)">ジョイスティックポート</span> (1) (1)</span></div>
<div class="tree" style="left:84px;top:894.2px;width:86.5px"><span class="t nr" style="left:58px"><span class="sq" style="width:19.00px;transform:scaleX(0.8876)">LED</span></span></div>
<div class="tree" style="left:84px;top:918.2px;width:130.5px"><span class="t nr" style="left:58px"><span class="sq" style="width:63.00px;transform:scaleX(0.7159)">リセットスイッチ</span></span></div>
<div class="tree" style="left:84px;top:942.2px;width:121.0px"><span class="t nr" style="left:58px"><span class="sq" style="width:20.46px;transform:scaleX(0.9300)">電源</span><span class="sq" style="width:33.04px;transform:scaleX(0.7509)">スイッチ</span></span></div>
<div class="tree" style="left:66px;top:966.2px;width:109.0px"><span class="t nr" style="left:58px"><span class="sq" style="width:41.50px;transform:scaleX(0.7545)">キャンバス</span></span></div>
<div class="tree" style="left:84px;top:990.2px;width:225.5px"><span class="t nr" style="left:58px"><span class="sq" style="width:158.00px;transform:scaleX(0.9603)">i-img1200x1200-172767953309...</span></span></div>
<div class="tree" style="left:84px;top:1014.2px;width:225.5px"><span class="t nr" style="left:58px"><span class="sq" style="width:158.00px;transform:scaleX(0.9603)">i-img1200x1200-172767953314...</span></span></div>
<div class="tree" style="left:84px;top:1038.2px;width:113.5px"><span class="t nr" style="left:58px"><span class="sq" style="width:46.00px;transform:scaleX(1.0162)">pc881fe2</span></span></div>
<div class="tree" style="left:84px;top:1062.2px;width:225.5px"><span class="t nr" style="left:58px"><span class="sq" style="width:158.00px;transform:scaleX(0.9603)">i-img1200x1200-172767953306...</span></span></div>
<div class="tree" style="left:84px;top:1086.2px;width:225.5px"><span class="t nr" style="left:58px"><span class="sq" style="width:158.00px;transform:scaleX(0.9762)">i-img1200x321-1703852103scy...</span></span></div><svg class="abs" style="left:0;top:140px" width="330" height="1020" viewBox="0 140 330 1020"><defs><linearGradient id="bodyg" x1="0" y1="0" x2="1" y2="0"><stop offset="0" stop-color="#fff"/><stop offset=".45" stop-color="#f4f4f4"/><stop offset="1" stop-color="#b8b8b8"/></linearGradient></defs><path d="M21 152.500v7l-4.500-3.500zM26.500 152.500v7l-4.500-3.500z" fill="#222"/><circle cx="295.500" cy="156" r="4.300" fill="#111"/><path d="M293 156h5" stroke="#fff" stroke-width="1.300"/><circle cx="295.300" cy="1143.300" r="4.300" fill="#111"/><path d="M292.800 1143.300h5M295.300 1140.800v5" stroke="#fff" stroke-width="1.200"/><rect x="16" y="174" width="6.500" height="933" fill="#c6c6c6"/><rect x="16.500" y="186" width="5.500" height="121" rx="2.700" fill="#8a8a8a" stroke="#666" stroke-width=".5"/><path d="M49 178.0l7.500 6.500-7.500 6.500z" fill="#fff" stroke="#333" stroke-width="1.200" stroke-linejoin="round"/><g transform="translate(75.5 184.0)"><rect x="-1.500" y="-7" width="3" height="14" fill="#666" transform="rotate(0)"/><rect x="-1.500" y="-7" width="3" height="14" fill="#666" transform="rotate(45)"/><rect x="-1.500" y="-7" width="3" height="14" fill="#666" transform="rotate(90)"/><rect x="-1.500" y="-7" width="3" height="14" fill="#666" transform="rotate(135)"/><rect x="-1.500" y="-7" width="3" height="14" fill="#666" transform="rotate(180)"/><rect x="-1.500" y="-7" width="3" height="14" fill="#666" transform="rotate(225)"/><rect x="-1.500" y="-7" width="3" height="14" fill="#666" transform="rotate(270)"/><rect x="-1.500" y="-7" width="3" height="14" fill="#666" transform="rotate(315)"/><circle r="5" fill="#666"/><circle r="2.200" fill="#f0f0f0"/></g><path d="M49 202.0l7.500 6.500-7.500 6.500z" fill="#fff" stroke="#333" stroke-width="1.200" stroke-linejoin="round"/><path d="M69 202.0h6.500l1.200 2h8.300v11h-16z" fill="#9a9a9a"/><path d="M69 205.2h16" stroke="#b8b8b8" stroke-width=".8"/><path d="M49 226.0l7.500 6.500-7.500 6.500z" fill="#fff" stroke="#333" stroke-width="1.200" stroke-linejoin="round"/><path d="M69.5 232.5c3-4.300 5.500-5.300 7.500-5.300s4.500 1 7.500 5.300c-3 4.300-5.500 5.300-7.500 5.300s-4.500-1-7.500-5.300z" fill="none" stroke="#a8a8a8" stroke-width="1"/><circle cx="77" cy="232.5" r="2.600" fill="none" stroke="#a8a8a8" stroke-width="1"/><path d="M71.5 227.0l11 11" stroke="#f0f0f0" stroke-width="2.600"/><path d="M72 227.0l10.500 11" stroke="#a0a0a0" stroke-width="1"/><path d="M94 226.0h6.500l1.200 2h8.300v11h-16z" fill="#9a9a9a"/><path d="M94 229.2h16" stroke="#b8b8b8" stroke-width=".8"/><path d="M57.5 251.0v10.500h-10.500z" fill="#777" stroke="#222" stroke-width="1.100" stroke-linejoin="round"/><path d="M69 256.5c3-4.600 5.500-5.600 8-5.600s5 1 8 5.600c-3 4.600-5.500 5.600-8 5.600s-5-1-8-5.600z" fill="#8c8c8c"/><circle cx="77" cy="256.5" r="3.300" fill="#efefef"/><circle cx="77" cy="256.5" r="1.900" fill="#8c8c8c"/><path d="M94 250.0h6.500l1.200 2h8.300v11h-16z" fill="#9a9a9a"/><path d="M94 253.2h16" stroke="#b8b8b8" stroke-width=".8"/><path d="M75.5 275.0v10.500h-10.500z" fill="#777" stroke="#222" stroke-width="1.100" stroke-linejoin="round"/><path d="M87 280.5c3-4.600 5.500-5.600 8-5.600s5 1 8 5.600c-3 4.600-5.500 5.600-8 5.600s-5-1-8-5.600z" fill="#8c8c8c"/><circle cx="95" cy="280.5" r="3.300" fill="#efefef"/><circle cx="95" cy="280.5" r="1.900" fill="#8c8c8c"/><path d="M112 274.0h6.500l1.200 2h8.300v11h-16z" fill="#9a9a9a"/><path d="M112 277.2h16" stroke="#b8b8b8" stroke-width=".8"/><path d="M105 304.5c3-4.600 5.500-5.600 8-5.600s5 1 8 5.600c-3 4.600-5.500 5.600-8 5.600s-5-1-8-5.600z" fill="#8c8c8c"/><circle cx="113" cy="304.5" r="3.300" fill="#efefef"/><circle cx="113" cy="304.5" r="1.900" fill="#8c8c8c"/><rect x="130.5" y="296.5" width="15" height="16.500" rx="4" fill="url(#bodyg)" stroke="#444" stroke-width="1.100"/><path d="M130.8 300.0c2 2.200 12.400 2.200 14.400 0" fill="none" stroke="#666" stroke-width=".9"/><path d="M105 328.5c3-4.600 5.500-5.600 8-5.600s5 1 8 5.600c-3 4.600-5.500 5.600-8 5.600s-5-1-8-5.600z" fill="#8c8c8c"/><circle cx="113" cy="328.5" r="3.300" fill="#efefef"/><circle cx="113" cy="328.5" r="1.900" fill="#8c8c8c"/><rect x="130.5" y="320.5" width="15" height="16.500" rx="4" fill="url(#bodyg)" stroke="#444" stroke-width="1.100"/><path d="M130.8 324.0c2 2.200 12.400 2.200 14.400 0" fill="none" stroke="#666" stroke-width=".9"/><path d="M105 352.5c3-4.600 5.500-5.600 8-5.600s5 1 8 5.600c-3 4.600-5.500 5.600-8 5.600s-5-1-8-5.600z" fill="#8c8c8c"/><circle cx="113" cy="352.5" r="3.300" fill="#efefef"/><circle cx="113" cy="352.5" r="1.900" fill="#8c8c8c"/><rect x="130.5" y="344.5" width="15" height="16.500" rx="4" fill="url(#bodyg)" stroke="#444" stroke-width="1.100"/><path d="M130.8 348.0c2 2.200 12.400 2.200 14.400 0" fill="none" stroke="#666" stroke-width=".9"/><path d="M105 376.5c3-4.600 5.500-5.600 8-5.600s5 1 8 5.600c-3 4.600-5.500 5.600-8 5.600s-5-1-8-5.600z" fill="#8c8c8c"/><circle cx="113" cy="376.5" r="3.300" fill="#efefef"/><circle cx="113" cy="376.5" r="1.900" fill="#8c8c8c"/><rect x="130.5" y="368.5" width="15" height="16.500" rx="4" fill="url(#bodyg)" stroke="#444" stroke-width="1.100"/><path d="M130.8 372.0c2 2.200 12.400 2.200 14.400 0" fill="none" stroke="#666" stroke-width=".9"/><path d="M105 400.5c3-4.600 5.500-5.600 8-5.600s5 1 8 5.600c-3 4.600-5.500 5.600-8 5.600s-5-1-8-5.600z" fill="#8c8c8c"/><circle cx="113" cy="400.5" r="3.300" fill="#efefef"/><circle cx="113" cy="400.5" r="1.900" fill="#8c8c8c"/><rect x="130.5" y="392.5" width="15" height="16.500" rx="4" fill="url(#bodyg)" stroke="#444" stroke-width="1.100"/><path d="M130.8 396.0c2 2.200 12.400 2.200 14.400 0" fill="none" stroke="#666" stroke-width=".9"/><path d="M105 424.5c3-4.600 5.500-5.600 8-5.600s5 1 8 5.600c-3 4.600-5.500 5.600-8 5.600s-5-1-8-5.600z" fill="#8c8c8c"/><circle cx="113" cy="424.5" r="3.300" fill="#efefef"/><circle cx="113" cy="424.5" r="1.900" fill="#8c8c8c"/><rect x="130.5" y="416.5" width="15" height="16.500" rx="4" fill="url(#bodyg)" stroke="#444" stroke-width="1.100"/><path d="M130.8 420.0c2 2.200 12.400 2.200 14.400 0" fill="none" stroke="#666" stroke-width=".9"/><path d="M105 448.5c3-4.600 5.500-5.600 8-5.600s5 1 8 5.600c-3 4.600-5.500 5.600-8 5.600s-5-1-8-5.600z" fill="#8c8c8c"/><circle cx="113" cy="448.5" r="3.300" fill="#efefef"/><circle cx="113" cy="448.5" r="1.900" fill="#8c8c8c"/><rect x="130.5" y="440.5" width="15" height="16.500" rx="4" fill="url(#bodyg)" stroke="#444" stroke-width="1.100"/><path d="M130.8 444.0c2 2.200 12.400 2.200 14.400 0" fill="none" stroke="#666" stroke-width=".9"/><path d="M105 472.5c3-4.600 5.500-5.600 8-5.600s5 1 8 5.600c-3 4.600-5.500 5.600-8 5.600s-5-1-8-5.600z" fill="#8c8c8c"/><circle cx="113" cy="472.5" r="3.300" fill="#efefef"/><circle cx="113" cy="472.5" r="1.900" fill="#8c8c8c"/><rect x="130.5" y="464.5" width="15" height="16.500" rx="4" fill="url(#bodyg)" stroke="#444" stroke-width="1.100"/><path d="M130.8 468.0c2 2.200 12.400 2.200 14.400 0" fill="none" stroke="#666" stroke-width=".9"/><path d="M87 496.5c3-4.600 5.500-5.600 8-5.600s5 1 8 5.600c-3 4.600-5.500 5.600-8 5.600s-5-1-8-5.600z" fill="#8c8c8c"/><circle cx="95" cy="496.5" r="3.300" fill="#efefef"/><circle cx="95" cy="496.5" r="1.900" fill="#8c8c8c"/><rect x="112.5" y="488.5" width="15" height="16.500" rx="4" fill="url(#bodyg)" stroke="#444" stroke-width="1.100"/><path d="M112.8 492.0c2 2.200 12.400 2.200 14.400 0" fill="none" stroke="#666" stroke-width=".9"/><path d="M87 520.5c3-4.600 5.500-5.600 8-5.600s5 1 8 5.600c-3 4.600-5.500 5.600-8 5.600s-5-1-8-5.600z" fill="#8c8c8c"/><circle cx="95" cy="520.5" r="3.300" fill="#efefef"/><circle cx="95" cy="520.5" r="1.900" fill="#8c8c8c"/><rect x="112.5" y="512.5" width="15" height="16.500" rx="4" fill="url(#bodyg)" stroke="#444" stroke-width="1.100"/><path d="M112.8 516.0c2 2.200 12.400 2.200 14.400 0" fill="none" stroke="#666" stroke-width=".9"/><path d="M87 544.5c3-4.600 5.500-5.600 8-5.600s5 1 8 5.600c-3 4.600-5.500 5.600-8 5.600s-5-1-8-5.600z" fill="#8c8c8c"/><circle cx="95" cy="544.5" r="3.300" fill="#efefef"/><circle cx="95" cy="544.5" r="1.900" fill="#8c8c8c"/><rect x="112.5" y="536.5" width="15" height="16.500" rx="4" fill="url(#bodyg)" stroke="#444" stroke-width="1.100"/><path d="M112.8 540.0c2 2.200 12.400 2.200 14.400 0" fill="none" stroke="#666" stroke-width=".9"/><path d="M87 568.5c3-4.600 5.500-5.600 8-5.600s5 1 8 5.600c-3 4.600-5.500 5.600-8 5.600s-5-1-8-5.600z" fill="#8c8c8c"/><circle cx="95" cy="568.5" r="3.300" fill="#efefef"/><circle cx="95" cy="568.5" r="1.900" fill="#8c8c8c"/><rect x="112.5" y="560.5" width="15" height="16.500" rx="4" fill="url(#bodyg)" stroke="#444" stroke-width="1.100"/><path d="M112.8 564.0c2 2.200 12.400 2.200 14.400 0" fill="none" stroke="#666" stroke-width=".9"/><path d="M87 592.5c3-4.600 5.500-5.600 8-5.600s5 1 8 5.600c-3 4.600-5.500 5.600-8 5.600s-5-1-8-5.600z" fill="#8c8c8c"/><circle cx="95" cy="592.5" r="3.300" fill="#efefef"/><circle cx="95" cy="592.5" r="1.900" fill="#8c8c8c"/><rect x="112.5" y="584.5" width="15" height="16.500" rx="4" fill="url(#bodyg)" stroke="#444" stroke-width="1.100"/><path d="M112.8 588.0c2 2.200 12.400 2.200 14.400 0" fill="none" stroke="#666" stroke-width=".9"/><path d="M87 616.5c3-4.600 5.500-5.600 8-5.600s5 1 8 5.600c-3 4.600-5.500 5.600-8 5.600s-5-1-8-5.600z" fill="#8c8c8c"/><circle cx="95" cy="616.5" r="3.300" fill="#efefef"/><circle cx="95" cy="616.5" r="1.900" fill="#8c8c8c"/><rect x="112.5" y="608.5" width="15" height="16.500" rx="4" fill="url(#bodyg)" stroke="#444" stroke-width="1.100"/><path d="M112.8 612.0c2 2.200 12.400 2.200 14.400 0" fill="none" stroke="#666" stroke-width=".9"/><path d="M87 640.5c3-4.600 5.500-5.600 8-5.600s5 1 8 5.600c-3 4.600-5.500 5.600-8 5.600s-5-1-8-5.600z" fill="#8c8c8c"/><circle cx="95" cy="640.5" r="3.300" fill="#efefef"/><circle cx="95" cy="640.5" r="1.900" fill="#8c8c8c"/><rect x="112.5" y="632.5" width="15" height="16.500" rx="4" fill="url(#bodyg)" stroke="#444" stroke-width="1.100"/><path d="M112.8 636.0c2 2.200 12.400 2.200 14.400 0" fill="none" stroke="#666" stroke-width=".9"/><path d="M87 664.5c3-4.600 5.500-5.600 8-5.600s5 1 8 5.600c-3 4.600-5.500 5.600-8 5.600s-5-1-8-5.600z" fill="#8c8c8c"/><circle cx="95" cy="664.5" r="3.300" fill="#efefef"/><circle cx="95" cy="664.5" r="1.900" fill="#8c8c8c"/><rect x="112.5" y="656.5" width="15" height="16.500" rx="4" fill="url(#bodyg)" stroke="#444" stroke-width="1.100"/><path d="M112.8 660.0c2 2.200 12.400 2.200 14.400 0" fill="none" stroke="#666" stroke-width=".9"/><path d="M87 688.5c3-4.600 5.500-5.600 8-5.600s5 1 8 5.600c-3 4.600-5.500 5.600-8 5.600s-5-1-8-5.600z" fill="#8c8c8c"/><circle cx="95" cy="688.5" r="3.300" fill="#efefef"/><circle cx="95" cy="688.5" r="1.900" fill="#8c8c8c"/><rect x="112.5" y="680.5" width="15" height="16.500" rx="4" fill="url(#bodyg)" stroke="#444" stroke-width="1.100"/><path d="M112.8 684.0c2 2.200 12.400 2.200 14.400 0" fill="none" stroke="#666" stroke-width=".9"/><path d="M87 712.5c3-4.600 5.500-5.600 8-5.600s5 1 8 5.600c-3 4.600-5.500 5.600-8 5.600s-5-1-8-5.600z" fill="#8c8c8c"/><circle cx="95" cy="712.5" r="3.300" fill="#efefef"/><circle cx="95" cy="712.5" r="1.900" fill="#8c8c8c"/><rect x="112.5" y="704.5" width="15" height="16.500" rx="4" fill="url(#bodyg)" stroke="#444" stroke-width="1.100"/><path d="M112.8 708.0c2 2.200 12.400 2.200 14.400 0" fill="none" stroke="#666" stroke-width=".9"/><path d="M87 736.5c3-4.600 5.500-5.600 8-5.600s5 1 8 5.600c-3 4.600-5.500 5.600-8 5.600s-5-1-8-5.600z" fill="#8c8c8c"/><circle cx="95" cy="736.5" r="3.300" fill="#efefef"/><circle cx="95" cy="736.5" r="1.900" fill="#8c8c8c"/><rect x="112.5" y="728.5" width="15" height="16.500" rx="4" fill="url(#bodyg)" stroke="#444" stroke-width="1.100"/><path d="M112.8 732.0c2 2.200 12.400 2.200 14.400 0" fill="none" stroke="#666" stroke-width=".9"/><path d="M87 760.5c3-4.600 5.500-5.600 8-5.600s5 1 8 5.600c-3 4.600-5.500 5.600-8 5.600s-5-1-8-5.600z" fill="#8c8c8c"/><circle cx="95" cy="760.5" r="3.300" fill="#efefef"/><circle cx="95" cy="760.5" r="1.900" fill="#8c8c8c"/><rect x="112.5" y="752.5" width="15" height="16.500" rx="4" fill="url(#bodyg)" stroke="#444" stroke-width="1.100"/><path d="M112.8 756.0c2 2.200 12.400 2.200 14.400 0" fill="none" stroke="#666" stroke-width=".9"/><path d="M87 784.5c3-4.600 5.500-5.600 8-5.600s5 1 8 5.600c-3 4.600-5.500 5.600-8 5.600s-5-1-8-5.600z" fill="#8c8c8c"/><circle cx="95" cy="784.5" r="3.300" fill="#efefef"/><circle cx="95" cy="784.5" r="1.900" fill="#8c8c8c"/><rect x="112.5" y="776.5" width="15" height="16.500" rx="4" fill="url(#bodyg)" stroke="#444" stroke-width="1.100"/><path d="M112.8 780.0c2 2.200 12.400 2.200 14.400 0" fill="none" stroke="#666" stroke-width=".9"/><path d="M87 808.5c3-4.600 5.500-5.600 8-5.600s5 1 8 5.600c-3 4.600-5.500 5.600-8 5.600s-5-1-8-5.600z" fill="#8c8c8c"/><circle cx="95" cy="808.5" r="3.300" fill="#efefef"/><circle cx="95" cy="808.5" r="1.900" fill="#8c8c8c"/><rect x="112.5" y="800.5" width="15" height="16.500" rx="4" fill="url(#bodyg)" stroke="#444" stroke-width="1.100"/><path d="M112.8 804.0c2 2.200 12.400 2.200 14.400 0" fill="none" stroke="#666" stroke-width=".9"/><path d="M87 832.5c3-4.600 5.500-5.600 8-5.600s5 1 8 5.600c-3 4.600-5.500 5.600-8 5.600s-5-1-8-5.600z" fill="#8c8c8c"/><circle cx="95" cy="832.5" r="3.300" fill="#efefef"/><circle cx="95" cy="832.5" r="1.900" fill="#8c8c8c"/><rect x="112.5" y="824.5" width="15" height="16.500" rx="4" fill="url(#bodyg)" stroke="#444" stroke-width="1.100"/><path d="M112.8 828.0c2 2.200 12.400 2.200 14.400 0" fill="none" stroke="#666" stroke-width=".9"/><path d="M87 856.5c3-4.600 5.500-5.600 8-5.600s5 1 8 5.600c-3 4.600-5.500 5.600-8 5.600s-5-1-8-5.600z" fill="#8c8c8c"/><circle cx="95" cy="856.5" r="3.300" fill="#efefef"/><circle cx="95" cy="856.5" r="1.900" fill="#8c8c8c"/><rect x="112.5" y="848.5" width="15" height="16.500" rx="4" fill="url(#bodyg)" stroke="#444" stroke-width="1.100"/><path d="M112.8 852.0c2 2.200 12.400 2.200 14.400 0" fill="none" stroke="#666" stroke-width=".9"/><path d="M87 880.5c3-4.600 5.500-5.600 8-5.600s5 1 8 5.600c-3 4.600-5.500 5.600-8 5.600s-5-1-8-5.600z" fill="#8c8c8c"/><circle cx="95" cy="880.5" r="3.300" fill="#efefef"/><circle cx="95" cy="880.5" r="1.900" fill="#8c8c8c"/><rect x="112.5" y="872.5" width="15" height="16.500" rx="4" fill="url(#bodyg)" stroke="#444" stroke-width="1.100"/><path d="M112.8 876.0c2 2.200 12.400 2.200 14.400 0" fill="none" stroke="#666" stroke-width=".9"/><path d="M87 904.5c3-4.600 5.500-5.600 8-5.600s5 1 8 5.600c-3 4.600-5.500 5.600-8 5.600s-5-1-8-5.600z" fill="#8c8c8c"/><circle cx="95" cy="904.5" r="3.300" fill="#efefef"/><circle cx="95" cy="904.5" r="1.900" fill="#8c8c8c"/><rect x="112.5" y="896.5" width="15" height="16.500" rx="4" fill="url(#bodyg)" stroke="#444" stroke-width="1.100"/><path d="M112.8 900.0c2 2.200 12.400 2.200 14.400 0" fill="none" stroke="#666" stroke-width=".9"/><path d="M87 928.5c3-4.600 5.500-5.600 8-5.600s5 1 8 5.600c-3 4.600-5.500 5.600-8 5.600s-5-1-8-5.600z" fill="#8c8c8c"/><circle cx="95" cy="928.5" r="3.300" fill="#efefef"/><circle cx="95" cy="928.5" r="1.900" fill="#8c8c8c"/><rect x="112.5" y="920.5" width="15" height="16.500" rx="4" fill="url(#bodyg)" stroke="#444" stroke-width="1.100"/><path d="M112.8 924.0c2 2.200 12.400 2.200 14.400 0" fill="none" stroke="#666" stroke-width=".9"/><path d="M87 952.5c3-4.600 5.500-5.600 8-5.600s5 1 8 5.600c-3 4.600-5.500 5.600-8 5.600s-5-1-8-5.600z" fill="#8c8c8c"/><circle cx="95" cy="952.5" r="3.300" fill="#efefef"/><circle cx="95" cy="952.5" r="1.900" fill="#8c8c8c"/><rect x="112.5" y="944.5" width="15" height="16.500" rx="4" fill="url(#bodyg)" stroke="#444" stroke-width="1.100"/><path d="M112.8 948.0c2 2.200 12.400 2.200 14.400 0" fill="none" stroke="#666" stroke-width=".9"/><path d="M57.5 971.0v10.500h-10.500z" fill="#777" stroke="#222" stroke-width="1.100" stroke-linejoin="round"/><path d="M69 976.5c3-4.600 5.500-5.600 8-5.600s5 1 8 5.600c-3 4.600-5.500 5.600-8 5.600s-5-1-8-5.600z" fill="#8c8c8c"/><circle cx="77" cy="976.5" r="3.300" fill="#efefef"/><circle cx="77" cy="976.5" r="1.900" fill="#8c8c8c"/><path d="M94 970.0h6.500l1.200 2h8.300v11h-16z" fill="#9a9a9a"/><path d="M94 973.2h16" stroke="#b8b8b8" stroke-width=".8"/><path d="M87.5 1000.5c3-4.300 5.500-5.300 7.500-5.300s4.500 1 7.500 5.300c-3 4.300-5.500 5.300-7.500 5.300s-4.500-1-7.500-5.300z" fill="none" stroke="#a8a8a8" stroke-width="1"/><circle cx="95" cy="1000.5" r="2.600" fill="none" stroke="#a8a8a8" stroke-width="1"/><path d="M89.5 995.0l11 11" stroke="#f0f0f0" stroke-width="2.600"/><path d="M90 995.0l10.500 11" stroke="#a0a0a0" stroke-width="1"/><rect x="112.5" y="992.5" width="15.500" height="15.500" fill="#8ec6ee" stroke="#444" stroke-width="1"/><path d="M113 1007.5v-6l4-3.500 4 4 2.500-2 4 4v3.500z" fill="#56606a"/><circle cx="124.5" cy="996.0" r="1.600" fill="#fff7b0"/><circle cx="116.5" cy="1003.7" r="3.300" fill="none" stroke="#e02020" stroke-width="1.300"/><path d="M114.3 1001.5l4.400 4.400" stroke="#e02020" stroke-width="1.300"/><path d="M87.5 1024.5c3-4.300 5.500-5.300 7.500-5.300s4.500 1 7.500 5.300c-3 4.300-5.500 5.300-7.500 5.300s-4.500-1-7.500-5.300z" fill="none" stroke="#a8a8a8" stroke-width="1"/><circle cx="95" cy="1024.5" r="2.600" fill="none" stroke="#a8a8a8" stroke-width="1"/><path d="M89.5 1019.0l11 11" stroke="#f0f0f0" stroke-width="2.600"/><path d="M90 1019.0l10.500 11" stroke="#a0a0a0" stroke-width="1"/><rect x="112.5" y="1016.5" width="15.500" height="15.500" fill="#8ec6ee" stroke="#444" stroke-width="1"/><path d="M113 1031.5v-6l4-3.500 4 4 2.500-2 4 4v3.500z" fill="#56606a"/><circle cx="124.5" cy="1020.0" r="1.600" fill="#fff7b0"/><circle cx="116.5" cy="1027.7" r="3.300" fill="none" stroke="#e02020" stroke-width="1.300"/><path d="M114.3 1025.5l4.400 4.400" stroke="#e02020" stroke-width="1.300"/><path d="M87.5 1048.5c3-4.300 5.500-5.300 7.500-5.300s4.500 1 7.500 5.300c-3 4.300-5.500 5.300-7.500 5.300s-4.500-1-7.500-5.300z" fill="none" stroke="#a8a8a8" stroke-width="1"/><circle cx="95" cy="1048.5" r="2.600" fill="none" stroke="#a8a8a8" stroke-width="1"/><path d="M89.5 1043.0l11 11" stroke="#f0f0f0" stroke-width="2.600"/><path d="M90 1043.0l10.500 11" stroke="#a0a0a0" stroke-width="1"/><rect x="112.5" y="1040.5" width="15.500" height="15.500" fill="#8ec6ee" stroke="#444" stroke-width="1"/><path d="M113 1055.5v-6l4-3.500 4 4 2.500-2 4 4v3.500z" fill="#56606a"/><circle cx="124.5" cy="1044.0" r="1.600" fill="#fff7b0"/><circle cx="116.5" cy="1051.7" r="3.300" fill="none" stroke="#e02020" stroke-width="1.300"/><path d="M114.3 1049.5l4.400 4.400" stroke="#e02020" stroke-width="1.300"/><path d="M87.5 1072.5c3-4.300 5.500-5.300 7.500-5.300s4.500 1 7.500 5.300c-3 4.300-5.500 5.300-7.500 5.300s-4.500-1-7.500-5.300z" fill="none" stroke="#a8a8a8" stroke-width="1"/><circle cx="95" cy="1072.5" r="2.600" fill="none" stroke="#a8a8a8" stroke-width="1"/><path d="M89.5 1067.0l11 11" stroke="#f0f0f0" stroke-width="2.600"/><path d="M90 1067.0l10.500 11" stroke="#a0a0a0" stroke-width="1"/><rect x="112.5" y="1064.5" width="15.500" height="15.500" fill="#8ec6ee" stroke="#444" stroke-width="1"/><path d="M113 1079.5v-6l4-3.500 4 4 2.500-2 4 4v3.500z" fill="#56606a"/><circle cx="124.5" cy="1068.0" r="1.600" fill="#fff7b0"/><circle cx="116.5" cy="1075.7" r="3.300" fill="none" stroke="#e02020" stroke-width="1.300"/><path d="M114.3 1073.5l4.400 4.400" stroke="#e02020" stroke-width="1.300"/><path d="M87.5 1096.5c3-4.300 5.500-5.300 7.500-5.300s4.500 1 7.500 5.300c-3 4.300-5.500 5.300-7.500 5.300s-4.500-1-7.500-5.300z" fill="none" stroke="#a8a8a8" stroke-width="1"/><circle cx="95" cy="1096.5" r="2.600" fill="none" stroke="#a8a8a8" stroke-width="1"/><path d="M89.5 1091.0l11 11" stroke="#f0f0f0" stroke-width="2.600"/><path d="M90 1091.0l10.500 11" stroke="#a0a0a0" stroke-width="1"/><rect x="112.5" y="1088.5" width="15.500" height="15.500" fill="#8ec6ee" stroke="#444" stroke-width="1"/><path d="M113 1103.5v-6l4-3.500 4 4 2.500-2 4 4v3.500z" fill="#56606a"/><circle cx="124.5" cy="1092.0" r="1.600" fill="#fff7b0"/><circle cx="116.5" cy="1099.7" r="3.300" fill="none" stroke="#e02020" stroke-width="1.300"/><path d="M114.3 1097.5l4.400 4.400" stroke="#e02020" stroke-width="1.300"/></svg>
<div id="titlebar" class="abs"></div>
<div id="appbar" class="abs"></div>
<div id="doctab" class="abs"></div>
<div id="toolbar" class="abs"></div>
<div id="tbshadow" class="abs"></div>
<div id="title" class="abs"><span class="nr">pc-8801fe2 v15 (g catsin) - Autodesk Fusion <span class="sq" style="width:32.67px;transform:scaleX(0.8936)">個人用</span>(<span class="sq" style="width:65.34px;transform:scaleX(0.8936)">商用利用不可</span>)</span></div>
<div class="abs" style="left:894px;top:34px;font-size:12px;line-height:16px;color:#333;white-space:nowrap"><span class="nr"><span class="sq" style="width:84.00px;transform:scaleX(1.0153)">pc-8801fe2 v15</span></span></div>
<div class="abs" style="left:1791px;top:32px;font-size:11px;line-height:16px;color:#333">1</div>
<div class="abs" style="left:20px;top:66px;width:109px;height:61px;border:1px solid #d9d9d9;border-radius:5px;background:#f3f3f3"></div>
<div class="abs nw" id="design" style="left:53px;top:88px;font-size:11px;line-height:16px;color:#222;white-space:nowrap"><span class="nr"><span class="sq" style="width:35.00px;transform:scaleX(0.7955)">デザイン</span></span></div>
<svg class="abs" style="left:90px;top:92px" width="10" height="8"><path d="M1.500 1.500h7l-3.500 4.500z" fill="#222"/></svg>
<div class="tab" style="left:158px;color:#0696d7;"><span class="nr"><span class="sq" style="width:32.00px;transform:scaleX(0.7273)">ソリッド</span></span></div>
<div class="tab" style="left:236px;"><span class="nr"><span class="sq" style="width:39.00px;transform:scaleX(0.7177)">サーフェス</span></span></div>
<div class="tab" style="left:319px;"><span class="nr"><span class="sq" style="width:31.00px;transform:scaleX(0.7045)">メッシュ</span></span></div>
<div class="tab" style="left:397px;"><span class="nr"><span class="sq" style="width:31.00px;transform:scaleX(0.7098)">フォーム</span></span></div>
<div class="tab" style="left:475px;"><span class="nr"><span class="sq" style="width:24.47px;transform:scaleX(0.7415)">シート</span> <span class="sq" style="width:24.47px;transform:scaleX(0.7415)">メタル</span></span></div>
<div class="tab" style="left:573px;"><span class="nr"><span class="sq" style="width:47.00px;transform:scaleX(0.7145)">プラスチック</span></span></div>
<div class="tab" style="left:666px;"><span class="nr"><span class="sq" style="width:53.00px;transform:scaleX(0.7002)">ユーティリティ</span></span></div>
<div class="abs" style="left:146px;top:75px;width:57px;height:3px;background:#0696d7"></div>
<div class="grp" style="left:230px"><span class="nr">作成</span></div>
<svg class="abs" style="left:253px;top:123px" width="8" height="6"><path d="M.8 .8h6l-3 4z" fill="#333"/></svg>
<div class="grp" style="left:477px"><span class="nr">修正</span></div>
<svg class="abs" style="left:500px;top:123px" width="8" height="6"><path d="M.8 .8h6l-3 4z" fill="#333"/></svg>
<div class="grp" style="left:650px"><span class="nr"><span class="sq" style="width:42.00px;transform:scaleX(0.7713)">アセンブリ</span></span></div>
<svg class="abs" style="left:693px;top:123px" width="8" height="6"><path d="M.8 .8h6l-3 4z" fill="#333"/></svg>
<div class="grp" style="left:739px"><span class="nr"><span class="sq" style="width:87.00px;transform:scaleX(0.7249)">コンフィギュレーション</span></span></div>
<svg class="abs" style="left:827px;top:123px" width="8" height="6"><path d="M.8 .8h6l-3 4z" fill="#333"/></svg>
<div class="grp" style="left:864px"><span class="nr">構築</span></div>
<svg class="abs" style="left:887px;top:123px" width="8" height="6"><path d="M.8 .8h6l-3 4z" fill="#333"/></svg>
<div class="grp" style="left:922px"><span class="nr">検査</span></div>
<svg class="abs" style="left:945px;top:123px" width="8" height="6"><path d="M.8 .8h6l-3 4z" fill="#333"/></svg>
<div class="grp" style="left:998px"><span class="nr">挿入</span></div>
<svg class="abs" style="left:1021px;top:123px" width="8" height="6"><path d="M.8 .8h6l-3 4z" fill="#333"/></svg>
<div class="grp" style="left:1078px"><span class="nr">選択</span></div>
<svg class="abs" style="left:1101px;top:123px" width="8" height="6"><path d="M.8 .8h6l-3 4z" fill="#333"/></svg>
<div class="vdiv" style="left:359px"></div>
<div class="vdiv" style="left:628px"></div>
<div class="vdiv" style="left:725px"></div>
<div class="vdiv" style="left:849px"></div>
<div class="vdiv" style="left:908px"></div>
<div class="vdiv" style="left:967px"></div>
<div class="vdiv" style="left:1064px"></div>
<svg class="abs" style="left:0;top:0" width="1928" height="60" viewBox="0 0 1928 60"><rect x="10" y="3" width="14.5" height="16" rx="2.5" fill="#f26a1b"/><rect x="10.5" y="13.5" width="13.5" height="5.5" rx="1.5" fill="#a5400c"/><text x="17.300" y="12.600" font-size="9.500" font-weight="bold" fill="#fff" text-anchor="middle" font-family="Liberation Sans,sans-serif">F</text><rect x="14" y="15.3" width="6" height="1.6" fill="#f7c9a8" opacity=".8"/><rect x="17" y="32" width="4" height="4" fill="#666"/><rect x="22" y="32" width="4" height="4" fill="#666"/><rect x="27" y="32" width="4" height="4" fill="#666"/><rect x="17" y="37" width="4" height="4" fill="#666"/><rect x="22" y="37" width="4" height="4" fill="#666"/><rect x="27" y="37" width="4" height="4" fill="#666"/><rect x="17" y="42" width="4" height="4" fill="#666"/><rect x="22" y="42" width="4" height="4" fill="#666"/><rect x="27" y="42" width="4" height="4" fill="#666"/><path d="M50 31h8l5 5v11h-13z" fill="#666"/><path d="M58.5 31v4.5h4.5z" fill="#ccc"/><path d="M69 36.5h7l-3.5 4.5z" fill="#666"/><path d="M95 32h12.5l1.5 1.5v12.5h-14z" fill="#999"/><rect x="98" y="32" width="7.5" height="4.6" fill="#ccc"/><rect x="98" y="40" width="8" height="6" fill="#ccc"/><rect x="99.5" y="41.5" width="5" height="4.5" fill="#999"/><path d="M140 45c0-5-3.5-7.3-9.5-7.3" fill="none" stroke="#666" stroke-width="2"/><path d="M134.5 33.5l-5 4.2 5 4.2" fill="none" stroke="#666" stroke-width="2"/><path d="M148 36.5h7l-3.5 4.5z" fill="#666"/><path d="M169 45c0-5 3.5-7.3 9.5-7.3" fill="none" stroke="#999" stroke-width="2"/><path d="M175 33.5l5 4.2-5 4.2" fill="none" stroke="#999" stroke-width="2"/><path d="M187.5 36.5h7l-3.5 4.5z" fill="#999"/><path d="M1806.5 10.5h10" stroke="#000" stroke-width="1"/><rect x="1852.5" y="7.500" width="7" height="7" fill="#fff" stroke="#000"/><path d="M1854.5 7.500v-2h7v7h-2" fill="none" stroke="#000"/><path d="M1898 5l10 10M1908 5l-10 10" stroke="#000" stroke-width="1.1"/><path d="M882 34l7 3.500v8l-7 3.500-7-3.500v-8z" fill="#f58220"/><path d="M882 34l7 3.500-7 3.500-7-3.500z" fill="#ffb36b"/><path d="M882 41v8l7-3.500v-8z" fill="#d9600f"/><path d="M1647 37l8 8M1655 37l-8 8" stroke="#666" stroke-width="1.3"/><rect x="1666" y="27" width="28" height="28" rx="3" fill="#b9b9b9"/><path d="M1674 41h12M1680 35v12" stroke="#666" stroke-width="2.2"/><circle cx="1714" cy="39.500" r="8.2" fill="#1a9be0"/><path d="M1708.500 41h5M1711 38.500v5" stroke="#fff" stroke-width="1.6"/><path d="M1716.500 34.500l.8 2 2 .8-2 .8-.8 2-.8-2-2-.8 2-.8z" fill="#fff"/><circle cx="1717.500" cy="42.500" r="1" fill="#fff"/><circle cx="1747" cy="39.500" r="7" fill="none" stroke="#555" stroke-width="2.2"/><path d="M1741 44l6-4.500 2-5.500" fill="none" stroke="#555" stroke-width="2.400"/><path d="M1749 33l4 1-1 4z" fill="#555"/><circle cx="1779.500" cy="39.500" r="7.300" fill="none" stroke="#555" stroke-width="1.200"/><circle cx="1779.500" cy="39.500" r="5.600" fill="#555"/><path d="M1779.500 35.500v4.300h3.500" fill="none" stroke="#ddd" stroke-width="1.300"/><path d="M1828.500 32c-3.500 0-5 2.500-5 5.500 0 4-1.500 5-2 6h14c-.5-1-2-2-2-6 0-3-1.500-5.500-5-5.500z" fill="#555"/><path d="M1826.500 44.500a2 2 0 0 0 4 0z" fill="#555"/><circle cx="1833" cy="34.500" r="2.800" fill="#1a9be0"/><circle cx="1862" cy="39.500" r="8" fill="#555"/><text x="1862" y="44.300" font-size="13" font-weight="bold" fill="#d8d8d8" text-anchor="middle" font-family="Liberation Sans,sans-serif">?</text><defs><linearGradient id="avg" x1="0" y1="0" x2="0" y2="1"><stop offset="0" stop-color="#8191a8"/><stop offset="1" stop-color="#b8c2d0"/></linearGradient><clipPath id="avc"><circle cx="1903" cy="39.500" r="12"/></clipPath></defs><circle cx="1903" cy="39.500" r="12" fill="url(#avg)"/><g clip-path="url(#avc)"><ellipse cx="1903.500" cy="36.500" rx="4.800" ry="6" fill="#2e3a4f"/><path d="M1893 52c0-6 4-8 10.500-8s10 2 10 8z" fill="#3a465c"/></g></svg>
<svg class="abs" style="left:0;top:60px" width="1928" height="76" viewBox="0 60 1928 76"><rect x="146.5" y="83.5" width="27" height="27" fill="none" stroke="#666" stroke-width="1.2" stroke-dasharray="9 4" stroke-dashoffset="-4"/><rect x="145" y="82" width="3" height="3" fill="#555"/><rect x="172" y="82" width="3" height="3" fill="#555"/><rect x="145" y="109" width="3" height="3" fill="#555"/><path d="M153.500 90.500h4.500M162 90.500h4M153.500 92v4M153.500 99v3.500" stroke="#666" stroke-width="1.2" fill="none"/><path d="M166.800 91c0 7-5 11.500-12.500 12" stroke="#666" stroke-width="1.2" fill="none"/><rect x="152" y="89" width="3" height="3" fill="#555"/><rect x="165.5" y="89" width="3" height="3" fill="#555"/><rect x="152" y="102" width="3" height="3" fill="#555"/><path d="M163 106.800h13.800M169.900 100v13.600" stroke="#22a33a" stroke-width="3.200"/><path d="M189 109h18l5.700-5v4.500l-5.700 5h-18z" fill="#c2c2c2"/><path d="M207 109l5.700-5v4.500l-5.700 5z" fill="#aaa"/><path d="M189 87.8h18v21.2h-18z" fill="#6aaee2"/><path d="M189 87.8l5.6 -5.6h18l-5.6 5.6z" fill="#8dcbf6"/><path d="M207 87.8l5.6 -5.6v21.2l-5.6 5.6z" fill="#4a92cc"/><path d="M216.800 107.700v-22" stroke="#222" stroke-width="1.200"/><path d="M214.600 87.500l2.200-4.500 2.200 4.500z" fill="#222"/><path d="M233 88.500c8-6.500 20-6.500 28 .5" fill="none" stroke="#333" stroke-width="1.100"/><path d="M231.500 89.800l5-3.200-.8 4.300z" fill="#222"/><path d="M231.500 97.500c8-10.500 23-10.500 31.500-2l-5.500 6c-5.500-4.500-13.500-4-19 1z" fill="#8dcbf6"/><path d="M231.500 97.500l7 5c5.500-5 13.500-5.500 19-1v9.500c-6-3.500-13-3-19 2l-7-7.500z" fill="#6aaee2"/><path d="M231.500 97.500l7 5v10.500l-7-7.500z" fill="#4a92cc"/><path d="M257.500 101.500l5.500-6v9.500l-5.500 6z" fill="#f4f4f4" stroke="#555" stroke-width="1"/><path d="M274.5 88.3h25.5v24.8h-25.5z" fill="#dcdcdc" stroke="#666" stroke-width="1.1" stroke-linejoin="round"/><path d="M274.5 88.3l6 -6h25.5l-6 6z" fill="#f0f0f0" stroke="#666" stroke-width="1.1" stroke-linejoin="round"/><path d="M300.0 88.3l6 -6v24.8l-6 6z" fill="#b8b8b8" stroke="#666" stroke-width="1.1" stroke-linejoin="round"/><circle cx="287.500" cy="100.500" r="8.200" fill="#f2f2f2" stroke="#555" stroke-width="1.1"/><circle cx="287.500" cy="100.500" r="6.300" fill="#6aaee2"/><circle cx="290.500" cy="97.800" r="4.400" fill="#f2f2f2"/><path d="M320.500 87.500h21M320.500 87.500v21M320.500 108.500h21" stroke="#555" stroke-width="1.100" fill="none"/><rect x="317.500" y="84.500" width="6" height="6" fill="#fff" stroke="#555"/><rect x="338.5" y="84" width="6.600" height="6.600" fill="#6aaee2"/><rect x="317.4" y="105.3" width="6.600" height="6.600" fill="#6aaee2"/><rect x="338.5" y="105.3" width="6.600" height="6.600" fill="#6aaee2"/><path d="M372 113.500v-25l6-6h5v31z" fill="#dcdcdc" stroke="#666" stroke-width="1.1" stroke-linejoin="round"/><path d="M379.4 87.7h9.2v25.6h-9.2z" fill="#6aaee2"/><path d="M379.4 87.7l5.4 -5.4h9.2l-5.4 5.4z" fill="#8dcbf6"/><path d="M388.59999999999997 87.7l5.4 -5.4v25.6l-5.4 5.4z" fill="#4a92cc"/><path d="M392 97.500h7" stroke="#222" stroke-width="1.200"/><path d="M397.500 95.300l4 2.200-4 2.200z" fill="#222"/><path d="M391 96h3v3h-3z" fill="#fff"/><path d="M392 97.500h6" stroke="#222" stroke-width="1.200"/><path d="M414.500 113.500v-24l7-7.200h10c8 0 14.500 6 14.500 14.500v9.500l-7 7.200z" fill="#dcdcdc" stroke="#666" stroke-width="1.100" stroke-linejoin="round"/><path d="M439 113.500v-10l7-6.700v9.500z" fill="#b8b8b8"/><path d="M426 88l5.500-5.700c8 0 14.500 6 14.500 14.500l-6.500 6.500c0-8-5.500-14.500-13.500-15.300z" fill="#6aaee2"/><path d="M457.5 89.3h24v24.5h-24z" fill="#f0f0f0" stroke="#666" stroke-width="1.1" stroke-linejoin="round"/><path d="M457.5 89.3l7 -7h24l-7 7z" fill="#f0f0f0" stroke="#666" stroke-width="1.1" stroke-linejoin="round"/><path d="M481.5 89.3l7 -7v24.5l-7 7z" fill="#b8b8b8" stroke="#666" stroke-width="1.1" stroke-linejoin="round"/><path d="M461.500 94h15.500v15.500h-15.500z" fill="#e4e4e4"/><path d="M461.500 94h7v8.500h8.500v7h-15.500z" fill="#4a92cc"/><path d="M461.500 109.500l7-7h8.500v7z" fill="#8dcbf6"/><path d="M509.5 87.1h17.5v14.5h-17.5z" fill="#6aaee2"/><path d="M509.5 87.1l4.8 -4.8h17.5l-4.8 4.8z" fill="#8dcbf6"/><path d="M527.0 87.1l4.8 -4.8v14.5l-4.8 4.8z" fill="#4a92cc"/><path d="M500 97.1h17.5v16.4h-17.5z" fill="#6aaee2"/><path d="M500 97.1l4.8 -4.8h17.5l-4.8 4.8z" fill="#8dcbf6"/><path d="M517.5 97.1l4.8 -4.8v16.4l-4.8 4.8z" fill="#4a92cc"/><path d="M517.500 101.500h10.500v-4" fill="none"/><path d="M545 104h22v12h-22z" fill="#dcdcdc" stroke="#777" stroke-width="1" stroke-linejoin="round"/><path d="M545 104l6 -6h22l-6 6z" fill="#f0f0f0" stroke="#777" stroke-width="1" stroke-linejoin="round"/><path d="M567 104l6 -6v12l-6 6z" fill="#b8b8b8" stroke="#777" stroke-width="1" stroke-linejoin="round"/><path d="M545 88.3h22v9.5h-22z" fill="#6aaee2"/><path d="M545 88.3l6 -6h22l-6 6z" fill="#8dcbf6"/><path d="M567 88.3l6 -6v9.5l-6 6z" fill="#4a92cc"/><path d="M543 100.500h24l7.500-7.500" fill="none" stroke="#fff" stroke-width="3"/><path d="M543 100.500h24l7.500-7.500" fill="none" stroke="#2b90e0" stroke-width="1.300"/><path d="M602 84v28M588 98h28" stroke="#333" stroke-width="2"/><path d="M597.300 88.500l4.700-6.300 4.700 6.300zM597.300 107.500l4.700 6.300 4.700-6.300zM592.500 93.300l-6.300 4.700 6.300 4.700zM611.500 93.300l6.300 4.700-6.300 4.700z" fill="#333"/><path d="M640.5 102.0h11.5v11.5h-11.5z" fill="#dcdcdc" stroke="#666" stroke-width="1" stroke-linejoin="round"/><path d="M640.5 102.0l3.5 -3.5h11.5l-3.5 3.5z" fill="#f0f0f0" stroke="#666" stroke-width="1" stroke-linejoin="round"/><path d="M652.0 102.0l3.5 -3.5v11.5l-3.5 3.5z" fill="#b8b8b8" stroke="#666" stroke-width="1" stroke-linejoin="round"/><path d="M652 102.0h11.5v11.5h-11.5z" fill="#dcdcdc" stroke="#666" stroke-width="1" stroke-linejoin="round"/><path d="M652 102.0l3.5 -3.5h11.5l-3.5 3.5z" fill="#f0f0f0" stroke="#666" stroke-width="1" stroke-linejoin="round"/><path d="M663.5 102.0l3.5 -3.5v11.5l-3.5 3.5z" fill="#b8b8b8" stroke="#666" stroke-width="1" stroke-linejoin="round"/><path d="M640.5 89.5h11.5v11.5h-11.5z" fill="#6aaee2"/><path d="M640.5 89.5l3.5 -3.5h11.5l-3.5 3.5z" fill="#8dcbf6"/><path d="M652.0 89.5l3.5 -3.5v11.5l-3.5 3.5z" fill="#4a92cc"/><path d="M663.500 82l1.700 5 4.300-3-2.200 4.700 5.200.3-4.600 2.500 3.600 3.800-5.100-1.200-.2 5.200-2.700-4.500-2.700 4.500-.2-5.200-5.100 1.200 3.600-3.800-4.600-2.500 5.200-.3-2.200-4.700 4.300 3z" fill="#f59c00"/><path d="M685.500 110.500v-18c0-3 1.500-6 5-8h5.500c1.500 0 2 1 2 2v7.500h-4.500c-1.500 0-2 1-2 2.500v11.500z" fill="#cfcfcf" stroke="#555" stroke-width="1" stroke-linejoin="round"/><ellipse cx="695.300" cy="86" rx="2.200" ry="1.300" fill="#eee" stroke="#555" stroke-width=".8"/><path d="M706 86.500l6.500 7v17l-6.500-6z" fill="#cfcfcf" stroke="#555" stroke-width="1" stroke-linejoin="round"/><path d="M701 97.500c0-1.500 4.500-1.500 4.500 0v8c0 1.500-4.500 1.500-4.500 0z" fill="#c4c4c4" stroke="#555" stroke-width="1"/><path d="M694.500 96.500v5.500M703.300 90v5.500" stroke="#1e88e5" stroke-width="1.200"/><g opacity=".55"><path d="M750.500 109v-19l7-7.500h17v26.500z" fill="#ececec" stroke="#d4d4d4"/><circle cx="774" cy="90" r="7.700" fill="#9fd0ee"/><path d="M769.500 91.500h6M772.500 88.500v6" stroke="#fff" stroke-width="1.400"/><path d="M776.500 85.500l.6 1.500 1.500.6-1.500.6-.6 1.500-.6-1.500-1.500-.6 1.500-.6z" fill="#fff"/><path d="M768 105h14M768 110.500h14" stroke="#d0d0d0" stroke-width="1.600"/><path d="M772 102.500v5M777.500 108v5" stroke="#b5d8ee" stroke-width="2"/><rect x="793.500" y="83" width="27" height="26" fill="#ececec" stroke="#d8d8d8"/><path d="M793.500 88.500h27M793.500 94.500h27M793.500 100.500h27M799.500 88.500v20.500M806 88.500v20.500M812.500 88.500v20.500" stroke="#d8d8d8" stroke-width="1"/><circle cx="817" cy="90" r="7.700" fill="#9fd0ee"/><path d="M812.500 91.500h6M815.500 88.500v6" stroke="#fff" stroke-width="1.400"/><path d="M819.500 85.500l.6 1.500 1.500.6-1.500.6-.6 1.500-.6-1.500-1.500-.6 1.500-.6z" fill="#fff"/><path d="M811 105h14M811 110.500h14" stroke="#d0d0d0" stroke-width="1.600"/><path d="M815 102.500v5M820.500 108v5" stroke="#b5d8ee" stroke-width="2"/></g><path d="M864.500 112.500v-22l8-8h8.500v22.500l-8 7.500z" fill="#fafafa" stroke="#555" stroke-width="1.100" stroke-linejoin="round"/><path d="M864.500 90.500h8.500v22h-8.500z" fill="#dcdcdc"/><path d="M864.500 112.500v-22l8-8h8.500" fill="none" stroke="#555" stroke-width="1.100"/><path d="M864.500 112.500h8.500" stroke="#555" stroke-width="1.100"/><path d="M873 91l9-9v22l-9 8.500z" fill="#5cc47c"/><path d="M885.500 91.500l8.500-9v21.500l-8.500 9z" fill="#e59a66"/><rect x="924.200" y="100" width="27.800" height="5.800" fill="#f7a400"/><path d="M927.0 100v2.4" stroke="#8a5a00" stroke-width=".8"/><path d="M929.8 100v1.5" stroke="#8a5a00" stroke-width=".8"/><path d="M932.5 100v2.4" stroke="#8a5a00" stroke-width=".8"/><path d="M935.3 100v1.5" stroke="#8a5a00" stroke-width=".8"/><path d="M938.1 100v2.4" stroke="#8a5a00" stroke-width=".8"/><path d="M940.9 100v1.5" stroke="#8a5a00" stroke-width=".8"/><path d="M943.7 100v2.4" stroke="#8a5a00" stroke-width=".8"/><path d="M946.4 100v1.5" stroke="#8a5a00" stroke-width=".8"/><path d="M949.2 100v2.4" stroke="#8a5a00" stroke-width=".8"/><path d="M924.700 90v9M951.500 90v9" stroke="#555" stroke-width="1"/><path d="M927 94.300h22" stroke="#555" stroke-width="1"/><path d="M929 92.300l-3 2 3 2M947 92.300l3 2-3 2" fill="none" stroke="#555" stroke-width="1"/><path d="M983 94.0h18v18.5h-18z" fill="#dcdcdc" stroke="#666" stroke-width="1" stroke-linejoin="round"/><path d="M983 94.0l7.5 -7.5h18l-7.5 7.5z" fill="#f0f0f0" stroke="#666" stroke-width="1" stroke-linejoin="round"/><path d="M1001 94.0l7.5 -7.5v18.5l-7.5 7.5z" fill="#b8b8b8" stroke="#666" stroke-width="1" stroke-linejoin="round"/><path d="M979 85.500h9v-3.300l8.500 5.500-8.500 5.700v-3.400h-9z" fill="#1e88e5"/><g fill="none" stroke="#222" stroke-width="2.200"><rect x="995" y="104" width="9" height="5.500" rx="2.700" transform="rotate(-35 999.500 106.700)"/><rect x="1001" y="100" width="9" height="5.500" rx="2.700" transform="rotate(-35 1005.500 102.700)"/></g><rect x="1023.400" y="83.300" width="28.400" height="28.400" fill="#8dcbff" stroke="#3f8fca" stroke-width=".8"/><path d="M1023.400 100c3-4 6-6 9-6 4 0 6 8 10 8 3 0 5-5 9.400-4v13.700h-28.400z" fill="#3f8fca"/><circle cx="1044" cy="90.700" r="3.100" fill="#fdf6c0"/><rect x="1075" y="79" width="38" height="38" fill="#0696d7"/><rect x="1078.500" y="82.500" width="27" height="21" fill="none" stroke="#8ff0a0" stroke-width="1.100" stroke-dasharray="4 2.500"/><path d="M1099.500 96.500v15.500l3.600-3.200 2.600 5.700 2.600-1.200-2.600-5.500h4.800z" fill="#fff"/></svg>
<div id="leftstrip" class="abs"></div>
<div class="abs" style="left:0;top:0;width:8px;height:40px;background:#dfe3ee"></div>
<div class="abs" style="left:-6px;top:40px;width:14px;height:58px;background:#fff;border-radius:0 8px 0 0"></div>
<div class="abs" style="left:-9px;top:52px;width:12px;height:22px;border-radius:6px;background:#d9e0f5"></div>
<div class="abs" style="left:0;top:104px;width:6px;height:284px;background:#5c5c5c"></div>
<svg class="abs" style="left:0;top:92px" width="8" height="10"><path d="M-2 6l3-3 3 3" fill="none" stroke="#444" stroke-width="1.200"/></svg>
<svg class="abs" style="left:0;top:1026px" width="8" height="10"><path d="M-3 3h6l-3 4z" fill="#444"/></svg>
<div class="abs" style="left:0;top:1040px;width:8px;height:128px;background:#000"></div>
<div class="abs" style="left:0;top:1040px;width:8px;height:40px;background:#121212"></div>
<svg class="abs" style="left:0;top:1062px" width="8" height="10"><path d="M-3 3h6l-3 4z" fill="#ddd"/></svg>
<div id="botstrip" class="abs"></div>
<div class="abs" style="left:56px;top:1160px;width:289px;height:8px;background:#f0f0f0;border-top:1px solid #cfcfcf"></div>
<div class="abs" style="left:884px;top:1160px;width:49px;height:8px;background:#3a3a3a"></div>
<div class="abs" style="left:1923px;top:1160px;width:1px;height:8px;background:#888"></div>

</div>
</body></html>
